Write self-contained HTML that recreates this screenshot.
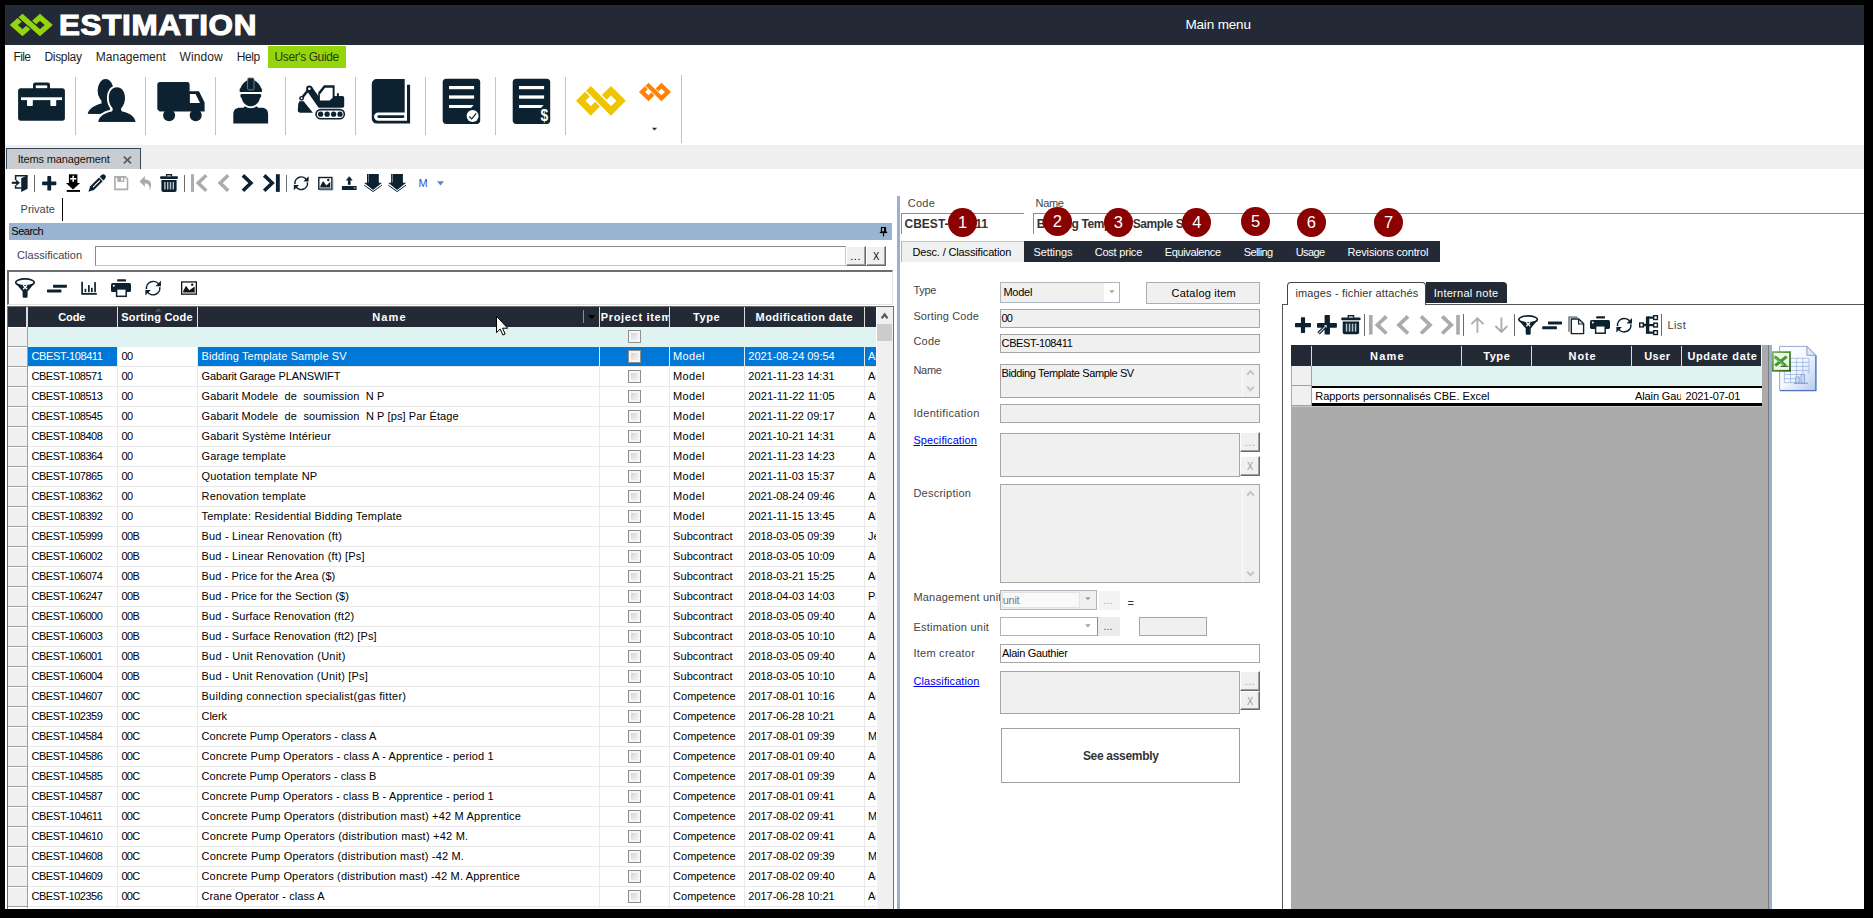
<!DOCTYPE html>
<html><head><meta charset="utf-8"><title>Estimation</title><style>html,body{margin:0;padding:0;background:#000;}
body{width:1873px;height:918px;position:relative;overflow:hidden;font-family:"Liberation Sans",sans-serif;}
.a{position:absolute;display:block;}
.t{position:absolute;display:block;white-space:pre;line-height:16px;height:16px;font-family:"Liberation Sans",sans-serif;}
</style></head><body>
<div class="a" style="left:5px;top:5px;width:1859px;height:904px;background:#fff;"></div>
<div class="a" style="left:5px;top:5px;width:1859px;height:39.5px;background:#232a36;"></div>
<span id="t1" class="t" style="left:59.3px;top:17.42px;font-size:28.8px;color:#fff;font-weight:bold;letter-spacing:0.628px;-webkit-text-stroke:1.1px #fff;transform:scaleX(1.09);transform-origin:0 0;">ESTIMATION</span>
<span id="t2" class="t" style="left:1185.4px;top:17.22px;font-size:13.5px;color:#fff;letter-spacing:-0.150px;">Main menu</span>
<div class="a" style="left:268px;top:46px;width:78px;height:22px;background:#95d50b;"></div>
<span id="t3" class="t" style="left:13.6px;top:48.74px;font-size:12px;color:#1e1e1e;letter-spacing:-0.648px;">File</span>
<span id="t4" class="t" style="left:44.5px;top:48.74px;font-size:12px;color:#1e1e1e;letter-spacing:-0.327px;">Display</span>
<span id="t5" class="t" style="left:95.8px;top:48.74px;font-size:12px;color:#1e1e1e;letter-spacing:-0.005px;">Management</span>
<span id="t6" class="t" style="left:179.5px;top:48.74px;font-size:12px;color:#1e1e1e;letter-spacing:0.103px;">Window</span>
<span id="t7" class="t" style="left:236.7px;top:48.74px;font-size:12px;color:#1e1e1e;letter-spacing:-0.362px;">Help</span>
<span id="t8" class="t" style="left:274.6px;top:48.74px;font-size:12px;color:#2a3a10;letter-spacing:-0.408px;">User's Guide</span>
<div class="a" style="left:75px;top:77px;width:1px;height:58px;background:#c3c3c3;"></div>
<div class="a" style="left:145px;top:77px;width:1px;height:58px;background:#c3c3c3;"></div>
<div class="a" style="left:215px;top:77px;width:1px;height:58px;background:#c3c3c3;"></div>
<div class="a" style="left:285px;top:77px;width:1px;height:58px;background:#c3c3c3;"></div>
<div class="a" style="left:355px;top:77px;width:1px;height:58px;background:#c3c3c3;"></div>
<div class="a" style="left:425px;top:77px;width:1px;height:58px;background:#c3c3c3;"></div>
<div class="a" style="left:495px;top:77px;width:1px;height:58px;background:#c3c3c3;"></div>
<div class="a" style="left:565px;top:77px;width:1px;height:58px;background:#c3c3c3;"></div>
<div class="a" style="left:681px;top:75px;width:1px;height:68px;background:#c3c3c3;"></div>
<div class="a" style="left:5px;top:145px;width:1859px;height:24px;background:#efefef;"></div>
<div class="a" style="left:6px;top:148px;width:135px;height:21px;background:#c9cdd1;border:1px solid #34495a;border-bottom:none;box-sizing:border-box;"></div>
<span id="t9" class="t" style="left:17.7px;top:151.29px;font-size:11px;color:#111;letter-spacing:-0.144px;">Items management</span>
<svg class="a" style="left:123px;top:156px;" width="9" height="8" viewBox="0 0 9 8"><path d="M0.8 0.6 L8 7.4 M8 0.6 L0.8 7.4" stroke="#555" stroke-width="1.5" fill="none"/></svg>
<div class="a" style="left:34px;top:175px;width:1px;height:17px;background:#6a6a6a;"></div>
<div class="a" style="left:184px;top:175px;width:1px;height:17px;background:#6a6a6a;"></div>
<div class="a" style="left:286px;top:175px;width:1px;height:17px;background:#6a6a6a;"></div>
<span id="t10" class="t" style="left:418.6px;top:175.29px;font-size:11px;color:#3050c8;letter-spacing:-1.572px;">M</span>
<svg class="a" style="left:436.5px;top:181px;" width="7" height="5" viewBox="0 0 7 5"><path d="M0 0.3 H7 L3.5 4.6 Z" fill="#5a84c4"/></svg>
<span id="t11" class="t" style="left:20.6px;top:200.79px;font-size:11px;color:#444;letter-spacing:0.008px;">Private</span>
<div class="a" style="left:62px;top:198px;width:1px;height:23px;background:#000;"></div>
<div class="a" style="left:9px;top:223px;width:883px;height:17px;background:#9ab3d1;"></div>
<span id="t12" class="t" style="left:11.3px;top:222.69px;font-size:11px;color:#000;letter-spacing:-0.492px;">Search</span>
<svg class="a" style="left:879px;top:227px;" width="9" height="10" viewBox="0 0 9 10"><path d="M2.5 0.5 H6.5 V5 H2.5 Z" fill="none" stroke="#000" stroke-width="1.2"/><path d="M5.8 0.5 V5" stroke="#000" stroke-width="1.6"/><path d="M0.8 5.4 H8.2" stroke="#000" stroke-width="1.4"/><path d="M4.5 5.4 V9.4" stroke="#000" stroke-width="1.2"/></svg>
<span id="t13" class="t" style="left:17.1px;top:247.19px;font-size:11px;color:#444;letter-spacing:0.014px;">Classification</span>
<div class="a" style="left:95px;top:246px;width:751px;height:20px;background:#fff;border:1px solid;border-color:#8c8c8c #c6c6c6 #c6c6c6 #8c8c8c;box-sizing:border-box;"></div>
<div class="a" style="left:845.8px;top:246px;width:20px;height:19.8px;background:#f0f0f0;border:1px solid;border-color:#fff #696969 #696969 #fff;box-sizing:border-box;box-shadow:inset -1px -1px 0 #a0a0a0;"></div>
<span id="t14" class="t" style="left:850.2px;top:248.39px;font-size:11px;color:#000;letter-spacing:0.614px;">...</span>
<div class="a" style="left:866.2px;top:246px;width:19.8px;height:19.8px;background:#f0f0f0;border:1px solid;border-color:#fff #696969 #696969 #fff;box-sizing:border-box;box-shadow:inset -1px -1px 0 #a0a0a0;"></div>
<span id="t15" class="t" style="left:872.5px;top:248.19px;font-size:11px;color:#000;transform:scaleX(0.86);transform-origin:0 0;">X</span>
<div class="a" style="left:7px;top:270px;width:885.5px;height:34.5px;background:#fff;box-sizing:border-box;border-top:2px solid #6e6e6e;border-left:2px solid #6e6e6e;border-right:1px solid #e3e3e3;border-bottom:1px solid #e3e3e3;"></div>
<div class="a" style="left:897px;top:196px;width:3px;height:713px;background:#98b1d1;"></div>
<div class="a" style="left:7px;top:306px;width:886.5px;height:603px;background:#fff;box-sizing:border-box;border-top:1px solid #6e6e6e;border-left:1px solid #6e6e6e;border-right:1px solid #6e6e6e;"></div>
<div class="a" style="left:8px;top:306.5px;width:868px;height:20.5px;background:#232a36;"></div>
<div class="a" style="left:26.4px;top:307px;width:1.3px;height:20px;background:#dcdcdc;"></div>
<div class="a" style="left:116.60000000000001px;top:307px;width:1.3px;height:20px;background:#dcdcdc;"></div>
<div class="a" style="left:197.0px;top:307px;width:1.3px;height:20px;background:#dcdcdc;"></div>
<div class="a" style="left:598.9px;top:307px;width:1.3px;height:20px;background:#dcdcdc;"></div>
<div class="a" style="left:668.6999999999999px;top:307px;width:1.3px;height:20px;background:#dcdcdc;"></div>
<div class="a" style="left:743.6px;top:307px;width:1.3px;height:20px;background:#dcdcdc;"></div>
<div class="a" style="left:863.8px;top:307px;width:1.3px;height:20px;background:#dcdcdc;"></div>
<div class="a" style="left:583.2px;top:310px;width:1px;height:13px;background:#8a8f96;"></div>
<svg class="a" style="left:587.5px;top:315px;" width="8" height="5" viewBox="0 0 8 5"><path d="M0 0 H7.4 L3.7 4.2 Z" fill="#000"/></svg>
<svg class="a" style="left:154.5px;top:307.5px;" width="7" height="4" viewBox="0 0 7 4"><path d="M0 3.6 L3.3 0.2 L6.6 3.6 Z" fill="#4a5563"/></svg>
<span id="t16" class="t" style="left:58.3px;top:309.19px;font-size:11px;color:#fff;font-weight:bold;letter-spacing:-0.167px;">Code</span>
<span id="t17" class="t" style="left:121.3px;top:309.19px;font-size:11px;color:#fff;font-weight:bold;letter-spacing:0.203px;">Sorting Code</span>
<span id="t18" class="t" style="left:372.2px;top:309.19px;font-size:11px;color:#fff;font-weight:bold;letter-spacing:1.177px;">Name</span>
<span id="t19" class="t" style="left:600.7px;top:309.19px;font-size:11px;color:#fff;font-weight:bold;letter-spacing:0.685px;width:68.2px;overflow:hidden;">Project item</span>
<span id="t20" class="t" style="left:693.1px;top:309.19px;font-size:11px;color:#fff;font-weight:bold;letter-spacing:0.580px;">Type</span>
<span id="t21" class="t" style="left:755.6px;top:309.19px;font-size:11px;color:#fff;font-weight:bold;letter-spacing:0.409px;">Modification date</span>
<div class="a" style="left:27.6px;top:327px;width:848.4px;height:19.5px;background:#dff3f1;"></div>
<div class="a" style="left:876.8px;top:306.8px;width:16.2px;height:602.2px;background:#f0f0f0;"></div>
<div class="a" style="left:877.2px;top:324.2px;width:15px;height:16.6px;background:#cdcdcd;"></div>
<svg class="a" style="left:879px;top:311px;" width="12" height="10" viewBox="0 0 12 10"><path d="M2.7 7.4 L5.6 3.4 L8.5 7.4" stroke="#585858" stroke-width="2.3" fill="none"/></svg>
<div class="a" style="left:116.7px;top:346.5px;width:1px;height:561.5px;background:#e9e9e9;"></div>
<div class="a" style="left:197.1px;top:346.5px;width:1px;height:561.5px;background:#e9e9e9;"></div>
<div class="a" style="left:599.0px;top:346.5px;width:1px;height:561.5px;background:#e9e9e9;"></div>
<div class="a" style="left:668.8px;top:346.5px;width:1px;height:561.5px;background:#e9e9e9;"></div>
<div class="a" style="left:743.7px;top:346.5px;width:1px;height:561.5px;background:#e9e9e9;"></div>
<div class="a" style="left:863.9px;top:346.5px;width:1px;height:561.5px;background:#e9e9e9;"></div>
<div class="a" style="left:628px;top:330px;width:13px;height:13px;box-sizing:border-box;border:1px solid #8e8f8f;background:linear-gradient(135deg,#c9ccd0 0%,#e4e5e7 50%,#fbfbfb 100%);box-shadow:inset 0 0 0 2px #f6f6f6;"></div>
<div class="a" style="left:8px;top:327px;width:19px;height:581px;background:#f0f0f0;"></div>
<div class="a" style="left:8px;top:327px;width:19px;height:1px;background:#fff;"></div>
<div class="a" style="left:27.6px;top:346.5px;width:89px;height:19.5px;background:#0078d7;"></div>
<div class="a" style="left:197.9px;top:346.5px;width:401.2px;height:19.5px;background:#0078d7;"></div>
<div class="a" style="left:600px;top:346.5px;width:68.9px;height:19.5px;background:#0078d7;"></div>
<div class="a" style="left:669.9px;top:346.5px;width:73.9px;height:19.5px;background:#0078d7;"></div>
<div class="a" style="left:744.8px;top:346.5px;width:119.1px;height:19.5px;background:#0078d7;"></div>
<div class="a" style="left:865px;top:346.5px;width:11px;height:19.5px;background:#0078d7;"></div>
<div class="a" style="left:27.6px;top:366.0px;width:848.4px;height:1px;background:#e9e9e9;"></div>
<span id="t22" class="t" style="left:31.5px;top:348.29px;font-size:11px;color:#fff;letter-spacing:-0.384px;">CBEST-108411</span>
<span id="t23" class="t" style="left:121.5px;top:348.29px;font-size:11px;color:#000;letter-spacing:-0.650px;">00</span>
<span id="t24" class="t" style="left:201.5px;top:348.29px;font-size:11px;color:#fff;letter-spacing:0.113px;">Bidding Template Sample SV</span>
<div class="a" style="left:628px;top:350.0px;width:13px;height:13px;box-sizing:border-box;border:1px solid #8e8f8f;background:linear-gradient(135deg,#c9ccd0 0%,#e4e5e7 50%,#fbfbfb 100%);box-shadow:inset 0 0 0 2px #f6f6f6;"></div>
<span id="t25" class="t" style="left:673.0px;top:348.29px;font-size:11px;color:#fff;letter-spacing:0.358px;">Model</span>
<span id="t26" class="t" style="left:748.3px;top:348.29px;font-size:11px;color:#fff;letter-spacing:-0.031px;">2021-08-24 09:54</span>
<span id="t27" class="t" style="left:868.0px;top:348.29px;font-size:11px;color:#fff;width:8.0px;overflow:hidden;">Al</span>
<div class="a" style="left:27.6px;top:386.0px;width:848.4px;height:1px;background:#e9e9e9;"></div>
<span id="t28" class="t" style="left:31.5px;top:368.29px;font-size:11px;color:#000;letter-spacing:-0.458px;">CBEST-108571</span>
<span id="t29" class="t" style="left:121.5px;top:368.29px;font-size:11px;color:#000;letter-spacing:-0.650px;">00</span>
<span id="t30" class="t" style="left:201.5px;top:368.29px;font-size:11px;color:#000;letter-spacing:-0.127px;">Gabarit Garage PLANSWIFT</span>
<div class="a" style="left:628px;top:370.0px;width:13px;height:13px;box-sizing:border-box;border:1px solid #8e8f8f;background:linear-gradient(135deg,#c9ccd0 0%,#e4e5e7 50%,#fbfbfb 100%);box-shadow:inset 0 0 0 2px #f6f6f6;"></div>
<span id="t31" class="t" style="left:673.0px;top:368.29px;font-size:11px;color:#000;letter-spacing:0.358px;">Model</span>
<span id="t32" class="t" style="left:748.3px;top:368.29px;font-size:11px;color:#000;letter-spacing:0.024px;">2021-11-23 14:31</span>
<span id="t33" class="t" style="left:868.0px;top:368.29px;font-size:11px;color:#000;width:8.0px;overflow:hidden;">Ad</span>
<div class="a" style="left:27.6px;top:406.0px;width:848.4px;height:1px;background:#e9e9e9;"></div>
<span id="t34" class="t" style="left:31.5px;top:388.29px;font-size:11px;color:#000;letter-spacing:-0.458px;">CBEST-108513</span>
<span id="t35" class="t" style="left:121.5px;top:388.29px;font-size:11px;color:#000;letter-spacing:-0.650px;">00</span>
<span id="t36" class="t" style="left:201.5px;top:388.29px;font-size:11px;color:#000;letter-spacing:0.108px;">Gabarit Modele  de  soumission  N P</span>
<div class="a" style="left:628px;top:390.0px;width:13px;height:13px;box-sizing:border-box;border:1px solid #8e8f8f;background:linear-gradient(135deg,#c9ccd0 0%,#e4e5e7 50%,#fbfbfb 100%);box-shadow:inset 0 0 0 2px #f6f6f6;"></div>
<span id="t37" class="t" style="left:673.0px;top:388.29px;font-size:11px;color:#000;letter-spacing:0.358px;">Model</span>
<span id="t38" class="t" style="left:748.3px;top:388.29px;font-size:11px;color:#000;letter-spacing:0.079px;">2021-11-22 11:05</span>
<span id="t39" class="t" style="left:868.0px;top:388.29px;font-size:11px;color:#000;width:8.0px;overflow:hidden;">Al</span>
<div class="a" style="left:27.6px;top:426.0px;width:848.4px;height:1px;background:#e9e9e9;"></div>
<span id="t40" class="t" style="left:31.5px;top:408.29px;font-size:11px;color:#000;letter-spacing:-0.458px;">CBEST-108545</span>
<span id="t41" class="t" style="left:121.5px;top:408.29px;font-size:11px;color:#000;letter-spacing:-0.650px;">00</span>
<span id="t42" class="t" style="left:201.5px;top:408.29px;font-size:11px;color:#000;letter-spacing:0.112px;">Gabarit Modele  de  soumission  N P [ps] Par Étage</span>
<div class="a" style="left:628px;top:410.0px;width:13px;height:13px;box-sizing:border-box;border:1px solid #8e8f8f;background:linear-gradient(135deg,#c9ccd0 0%,#e4e5e7 50%,#fbfbfb 100%);box-shadow:inset 0 0 0 2px #f6f6f6;"></div>
<span id="t43" class="t" style="left:673.0px;top:408.29px;font-size:11px;color:#000;letter-spacing:0.358px;">Model</span>
<span id="t44" class="t" style="left:748.3px;top:408.29px;font-size:11px;color:#000;letter-spacing:0.024px;">2021-11-22 09:17</span>
<span id="t45" class="t" style="left:868.0px;top:408.29px;font-size:11px;color:#000;width:8.0px;overflow:hidden;">Al</span>
<div class="a" style="left:27.6px;top:446.0px;width:848.4px;height:1px;background:#e9e9e9;"></div>
<span id="t46" class="t" style="left:31.5px;top:428.29px;font-size:11px;color:#000;letter-spacing:-0.458px;">CBEST-108408</span>
<span id="t47" class="t" style="left:121.5px;top:428.29px;font-size:11px;color:#000;letter-spacing:-0.650px;">00</span>
<span id="t48" class="t" style="left:201.5px;top:428.29px;font-size:11px;color:#000;letter-spacing:0.165px;">Gabarit Système Intérieur</span>
<div class="a" style="left:628px;top:430.0px;width:13px;height:13px;box-sizing:border-box;border:1px solid #8e8f8f;background:linear-gradient(135deg,#c9ccd0 0%,#e4e5e7 50%,#fbfbfb 100%);box-shadow:inset 0 0 0 2px #f6f6f6;"></div>
<span id="t49" class="t" style="left:673.0px;top:428.29px;font-size:11px;color:#000;letter-spacing:0.358px;">Model</span>
<span id="t50" class="t" style="left:748.3px;top:428.29px;font-size:11px;color:#000;letter-spacing:-0.031px;">2021-10-21 14:31</span>
<span id="t51" class="t" style="left:868.0px;top:428.29px;font-size:11px;color:#000;width:8.0px;overflow:hidden;">Al</span>
<div class="a" style="left:27.6px;top:466.0px;width:848.4px;height:1px;background:#e9e9e9;"></div>
<span id="t52" class="t" style="left:31.5px;top:448.29px;font-size:11px;color:#000;letter-spacing:-0.458px;">CBEST-108364</span>
<span id="t53" class="t" style="left:121.5px;top:448.29px;font-size:11px;color:#000;letter-spacing:-0.650px;">00</span>
<span id="t54" class="t" style="left:201.5px;top:448.29px;font-size:11px;color:#000;letter-spacing:0.169px;">Garage template</span>
<div class="a" style="left:628px;top:450.0px;width:13px;height:13px;box-sizing:border-box;border:1px solid #8e8f8f;background:linear-gradient(135deg,#c9ccd0 0%,#e4e5e7 50%,#fbfbfb 100%);box-shadow:inset 0 0 0 2px #f6f6f6;"></div>
<span id="t55" class="t" style="left:673.0px;top:448.29px;font-size:11px;color:#000;letter-spacing:0.358px;">Model</span>
<span id="t56" class="t" style="left:748.3px;top:448.29px;font-size:11px;color:#000;letter-spacing:0.024px;">2021-11-23 14:23</span>
<span id="t57" class="t" style="left:868.0px;top:448.29px;font-size:11px;color:#000;width:8.0px;overflow:hidden;">Al</span>
<div class="a" style="left:27.6px;top:486.0px;width:848.4px;height:1px;background:#e9e9e9;"></div>
<span id="t58" class="t" style="left:31.5px;top:468.29px;font-size:11px;color:#000;letter-spacing:-0.458px;">CBEST-107865</span>
<span id="t59" class="t" style="left:121.5px;top:468.29px;font-size:11px;color:#000;letter-spacing:-0.650px;">00</span>
<span id="t60" class="t" style="left:201.5px;top:468.29px;font-size:11px;color:#000;letter-spacing:0.220px;">Quotation template NP</span>
<div class="a" style="left:628px;top:470.0px;width:13px;height:13px;box-sizing:border-box;border:1px solid #8e8f8f;background:linear-gradient(135deg,#c9ccd0 0%,#e4e5e7 50%,#fbfbfb 100%);box-shadow:inset 0 0 0 2px #f6f6f6;"></div>
<span id="t61" class="t" style="left:673.0px;top:468.29px;font-size:11px;color:#000;letter-spacing:0.358px;">Model</span>
<span id="t62" class="t" style="left:748.3px;top:468.29px;font-size:11px;color:#000;letter-spacing:0.024px;">2021-11-03 15:37</span>
<span id="t63" class="t" style="left:868.0px;top:468.29px;font-size:11px;color:#000;width:8.0px;overflow:hidden;">Al</span>
<div class="a" style="left:27.6px;top:506.0px;width:848.4px;height:1px;background:#e9e9e9;"></div>
<span id="t64" class="t" style="left:31.5px;top:488.29px;font-size:11px;color:#000;letter-spacing:-0.458px;">CBEST-108362</span>
<span id="t65" class="t" style="left:121.5px;top:488.29px;font-size:11px;color:#000;letter-spacing:-0.650px;">00</span>
<span id="t66" class="t" style="left:201.5px;top:488.29px;font-size:11px;color:#000;letter-spacing:0.194px;">Renovation template</span>
<div class="a" style="left:628px;top:490.0px;width:13px;height:13px;box-sizing:border-box;border:1px solid #8e8f8f;background:linear-gradient(135deg,#c9ccd0 0%,#e4e5e7 50%,#fbfbfb 100%);box-shadow:inset 0 0 0 2px #f6f6f6;"></div>
<span id="t67" class="t" style="left:673.0px;top:488.29px;font-size:11px;color:#000;letter-spacing:0.358px;">Model</span>
<span id="t68" class="t" style="left:748.3px;top:488.29px;font-size:11px;color:#000;letter-spacing:-0.031px;">2021-08-24 09:46</span>
<span id="t69" class="t" style="left:868.0px;top:488.29px;font-size:11px;color:#000;width:8.0px;overflow:hidden;">Al</span>
<div class="a" style="left:27.6px;top:526.0px;width:848.4px;height:1px;background:#e9e9e9;"></div>
<span id="t70" class="t" style="left:31.5px;top:508.29px;font-size:11px;color:#000;letter-spacing:-0.458px;">CBEST-108392</span>
<span id="t71" class="t" style="left:121.5px;top:508.29px;font-size:11px;color:#000;letter-spacing:-0.650px;">00</span>
<span id="t72" class="t" style="left:201.5px;top:508.29px;font-size:11px;color:#000;letter-spacing:0.218px;">Template: Residential Bidding Template</span>
<div class="a" style="left:628px;top:510.0px;width:13px;height:13px;box-sizing:border-box;border:1px solid #8e8f8f;background:linear-gradient(135deg,#c9ccd0 0%,#e4e5e7 50%,#fbfbfb 100%);box-shadow:inset 0 0 0 2px #f6f6f6;"></div>
<span id="t73" class="t" style="left:673.0px;top:508.29px;font-size:11px;color:#000;letter-spacing:0.358px;">Model</span>
<span id="t74" class="t" style="left:748.3px;top:508.29px;font-size:11px;color:#000;letter-spacing:0.024px;">2021-11-15 13:45</span>
<span id="t75" class="t" style="left:868.0px;top:508.29px;font-size:11px;color:#000;width:8.0px;overflow:hidden;">Al</span>
<div class="a" style="left:27.6px;top:546.0px;width:848.4px;height:1px;background:#e9e9e9;"></div>
<span id="t76" class="t" style="left:31.5px;top:528.29px;font-size:11px;color:#000;letter-spacing:-0.458px;">CBEST-105999</span>
<span id="t77" class="t" style="left:121.5px;top:528.29px;font-size:11px;color:#000;letter-spacing:-0.589px;">00B</span>
<span id="t78" class="t" style="left:201.5px;top:528.29px;font-size:11px;color:#000;letter-spacing:0.198px;">Bud - Linear Renovation (ft)</span>
<div class="a" style="left:628px;top:530.0px;width:13px;height:13px;box-sizing:border-box;border:1px solid #8e8f8f;background:linear-gradient(135deg,#c9ccd0 0%,#e4e5e7 50%,#fbfbfb 100%);box-shadow:inset 0 0 0 2px #f6f6f6;"></div>
<span id="t79" class="t" style="left:673.0px;top:528.29px;font-size:11px;color:#000;letter-spacing:0.090px;">Subcontract</span>
<span id="t80" class="t" style="left:748.3px;top:528.29px;font-size:11px;color:#000;letter-spacing:-0.031px;">2018-03-05 09:39</span>
<span id="t81" class="t" style="left:868.0px;top:528.29px;font-size:11px;color:#000;width:8.0px;overflow:hidden;">Je</span>
<div class="a" style="left:27.6px;top:566.0px;width:848.4px;height:1px;background:#e9e9e9;"></div>
<span id="t82" class="t" style="left:31.5px;top:548.29px;font-size:11px;color:#000;letter-spacing:-0.458px;">CBEST-106002</span>
<span id="t83" class="t" style="left:121.5px;top:548.29px;font-size:11px;color:#000;letter-spacing:-0.589px;">00B</span>
<span id="t84" class="t" style="left:201.5px;top:548.29px;font-size:11px;color:#000;letter-spacing:0.186px;">Bud - Linear Renovation (ft) [Ps]</span>
<div class="a" style="left:628px;top:550.0px;width:13px;height:13px;box-sizing:border-box;border:1px solid #8e8f8f;background:linear-gradient(135deg,#c9ccd0 0%,#e4e5e7 50%,#fbfbfb 100%);box-shadow:inset 0 0 0 2px #f6f6f6;"></div>
<span id="t85" class="t" style="left:673.0px;top:548.29px;font-size:11px;color:#000;letter-spacing:0.090px;">Subcontract</span>
<span id="t86" class="t" style="left:748.3px;top:548.29px;font-size:11px;color:#000;letter-spacing:-0.031px;">2018-03-05 10:09</span>
<span id="t87" class="t" style="left:868.0px;top:548.29px;font-size:11px;color:#000;width:8.0px;overflow:hidden;">Ad</span>
<div class="a" style="left:27.6px;top:586.0px;width:848.4px;height:1px;background:#e9e9e9;"></div>
<span id="t88" class="t" style="left:31.5px;top:568.29px;font-size:11px;color:#000;letter-spacing:-0.458px;">CBEST-106074</span>
<span id="t89" class="t" style="left:121.5px;top:568.29px;font-size:11px;color:#000;letter-spacing:-0.589px;">00B</span>
<span id="t90" class="t" style="left:201.5px;top:568.29px;font-size:11px;color:#000;letter-spacing:0.109px;">Bud - Price for the Area ($)</span>
<div class="a" style="left:628px;top:570.0px;width:13px;height:13px;box-sizing:border-box;border:1px solid #8e8f8f;background:linear-gradient(135deg,#c9ccd0 0%,#e4e5e7 50%,#fbfbfb 100%);box-shadow:inset 0 0 0 2px #f6f6f6;"></div>
<span id="t91" class="t" style="left:673.0px;top:568.29px;font-size:11px;color:#000;letter-spacing:0.090px;">Subcontract</span>
<span id="t92" class="t" style="left:748.3px;top:568.29px;font-size:11px;color:#000;letter-spacing:-0.031px;">2018-03-21 15:25</span>
<span id="t93" class="t" style="left:868.0px;top:568.29px;font-size:11px;color:#000;width:8.0px;overflow:hidden;">Ad</span>
<div class="a" style="left:27.6px;top:606.0px;width:848.4px;height:1px;background:#e9e9e9;"></div>
<span id="t94" class="t" style="left:31.5px;top:588.29px;font-size:11px;color:#000;letter-spacing:-0.458px;">CBEST-106247</span>
<span id="t95" class="t" style="left:121.5px;top:588.29px;font-size:11px;color:#000;letter-spacing:-0.589px;">00B</span>
<span id="t96" class="t" style="left:201.5px;top:588.29px;font-size:11px;color:#000;letter-spacing:0.086px;">Bud - Price for the Section ($)</span>
<div class="a" style="left:628px;top:590.0px;width:13px;height:13px;box-sizing:border-box;border:1px solid #8e8f8f;background:linear-gradient(135deg,#c9ccd0 0%,#e4e5e7 50%,#fbfbfb 100%);box-shadow:inset 0 0 0 2px #f6f6f6;"></div>
<span id="t97" class="t" style="left:673.0px;top:588.29px;font-size:11px;color:#000;letter-spacing:0.090px;">Subcontract</span>
<span id="t98" class="t" style="left:748.3px;top:588.29px;font-size:11px;color:#000;letter-spacing:-0.031px;">2018-04-03 14:03</span>
<span id="t99" class="t" style="left:868.0px;top:588.29px;font-size:11px;color:#000;width:8.0px;overflow:hidden;">Pa</span>
<div class="a" style="left:27.6px;top:626.0px;width:848.4px;height:1px;background:#e9e9e9;"></div>
<span id="t100" class="t" style="left:31.5px;top:608.29px;font-size:11px;color:#000;letter-spacing:-0.458px;">CBEST-106000</span>
<span id="t101" class="t" style="left:121.5px;top:608.29px;font-size:11px;color:#000;letter-spacing:-0.589px;">00B</span>
<span id="t102" class="t" style="left:201.5px;top:608.29px;font-size:11px;color:#000;letter-spacing:0.139px;">Bud - Surface Renovation (ft2)</span>
<div class="a" style="left:628px;top:610.0px;width:13px;height:13px;box-sizing:border-box;border:1px solid #8e8f8f;background:linear-gradient(135deg,#c9ccd0 0%,#e4e5e7 50%,#fbfbfb 100%);box-shadow:inset 0 0 0 2px #f6f6f6;"></div>
<span id="t103" class="t" style="left:673.0px;top:608.29px;font-size:11px;color:#000;letter-spacing:0.090px;">Subcontract</span>
<span id="t104" class="t" style="left:748.3px;top:608.29px;font-size:11px;color:#000;letter-spacing:-0.031px;">2018-03-05 09:40</span>
<span id="t105" class="t" style="left:868.0px;top:608.29px;font-size:11px;color:#000;width:8.0px;overflow:hidden;">Ad</span>
<div class="a" style="left:27.6px;top:646.0px;width:848.4px;height:1px;background:#e9e9e9;"></div>
<span id="t106" class="t" style="left:31.5px;top:628.29px;font-size:11px;color:#000;letter-spacing:-0.458px;">CBEST-106003</span>
<span id="t107" class="t" style="left:121.5px;top:628.29px;font-size:11px;color:#000;letter-spacing:-0.589px;">00B</span>
<span id="t108" class="t" style="left:201.5px;top:628.29px;font-size:11px;color:#000;letter-spacing:0.135px;">Bud - Surface Renovation (ft2) [Ps]</span>
<div class="a" style="left:628px;top:630.0px;width:13px;height:13px;box-sizing:border-box;border:1px solid #8e8f8f;background:linear-gradient(135deg,#c9ccd0 0%,#e4e5e7 50%,#fbfbfb 100%);box-shadow:inset 0 0 0 2px #f6f6f6;"></div>
<span id="t109" class="t" style="left:673.0px;top:628.29px;font-size:11px;color:#000;letter-spacing:0.090px;">Subcontract</span>
<span id="t110" class="t" style="left:748.3px;top:628.29px;font-size:11px;color:#000;letter-spacing:-0.031px;">2018-03-05 10:10</span>
<span id="t111" class="t" style="left:868.0px;top:628.29px;font-size:11px;color:#000;width:8.0px;overflow:hidden;">Ad</span>
<div class="a" style="left:27.6px;top:666.0px;width:848.4px;height:1px;background:#e9e9e9;"></div>
<span id="t112" class="t" style="left:31.5px;top:648.29px;font-size:11px;color:#000;letter-spacing:-0.458px;">CBEST-106001</span>
<span id="t113" class="t" style="left:121.5px;top:648.29px;font-size:11px;color:#000;letter-spacing:-0.589px;">00B</span>
<span id="t114" class="t" style="left:201.5px;top:648.29px;font-size:11px;color:#000;letter-spacing:0.231px;">Bud - Unit Renovation (Unit)</span>
<div class="a" style="left:628px;top:650.0px;width:13px;height:13px;box-sizing:border-box;border:1px solid #8e8f8f;background:linear-gradient(135deg,#c9ccd0 0%,#e4e5e7 50%,#fbfbfb 100%);box-shadow:inset 0 0 0 2px #f6f6f6;"></div>
<span id="t115" class="t" style="left:673.0px;top:648.29px;font-size:11px;color:#000;letter-spacing:0.090px;">Subcontract</span>
<span id="t116" class="t" style="left:748.3px;top:648.29px;font-size:11px;color:#000;letter-spacing:-0.031px;">2018-03-05 09:40</span>
<span id="t117" class="t" style="left:868.0px;top:648.29px;font-size:11px;color:#000;width:8.0px;overflow:hidden;">Ad</span>
<div class="a" style="left:27.6px;top:686.0px;width:848.4px;height:1px;background:#e9e9e9;"></div>
<span id="t118" class="t" style="left:31.5px;top:668.29px;font-size:11px;color:#000;letter-spacing:-0.458px;">CBEST-106004</span>
<span id="t119" class="t" style="left:121.5px;top:668.29px;font-size:11px;color:#000;letter-spacing:-0.589px;">00B</span>
<span id="t120" class="t" style="left:201.5px;top:668.29px;font-size:11px;color:#000;letter-spacing:0.213px;">Bud - Unit Renovation (Unit) [Ps]</span>
<div class="a" style="left:628px;top:670.0px;width:13px;height:13px;box-sizing:border-box;border:1px solid #8e8f8f;background:linear-gradient(135deg,#c9ccd0 0%,#e4e5e7 50%,#fbfbfb 100%);box-shadow:inset 0 0 0 2px #f6f6f6;"></div>
<span id="t121" class="t" style="left:673.0px;top:668.29px;font-size:11px;color:#000;letter-spacing:0.090px;">Subcontract</span>
<span id="t122" class="t" style="left:748.3px;top:668.29px;font-size:11px;color:#000;letter-spacing:-0.031px;">2018-03-05 10:10</span>
<span id="t123" class="t" style="left:868.0px;top:668.29px;font-size:11px;color:#000;width:8.0px;overflow:hidden;">Ad</span>
<div class="a" style="left:27.6px;top:706.0px;width:848.4px;height:1px;background:#e9e9e9;"></div>
<span id="t124" class="t" style="left:31.5px;top:688.29px;font-size:11px;color:#000;letter-spacing:-0.458px;">CBEST-104607</span>
<span id="t125" class="t" style="left:121.5px;top:688.29px;font-size:11px;color:#000;letter-spacing:-0.794px;">00C</span>
<span id="t126" class="t" style="left:201.5px;top:688.29px;font-size:11px;color:#000;letter-spacing:0.275px;">Building connection specialist(gas fitter)</span>
<div class="a" style="left:628px;top:690.0px;width:13px;height:13px;box-sizing:border-box;border:1px solid #8e8f8f;background:linear-gradient(135deg,#c9ccd0 0%,#e4e5e7 50%,#fbfbfb 100%);box-shadow:inset 0 0 0 2px #f6f6f6;"></div>
<span id="t127" class="t" style="left:673.0px;top:688.29px;font-size:11px;color:#000;letter-spacing:0.036px;">Competence</span>
<span id="t128" class="t" style="left:748.3px;top:688.29px;font-size:11px;color:#000;letter-spacing:-0.031px;">2017-08-01 10:16</span>
<span id="t129" class="t" style="left:868.0px;top:688.29px;font-size:11px;color:#000;width:8.0px;overflow:hidden;">Ad</span>
<div class="a" style="left:27.6px;top:726.0px;width:848.4px;height:1px;background:#e9e9e9;"></div>
<span id="t130" class="t" style="left:31.5px;top:708.29px;font-size:11px;color:#000;letter-spacing:-0.458px;">CBEST-102359</span>
<span id="t131" class="t" style="left:121.5px;top:708.29px;font-size:11px;color:#000;letter-spacing:-0.794px;">00C</span>
<span id="t132" class="t" style="left:201.5px;top:708.29px;font-size:11px;color:#000;letter-spacing:-0.018px;">Clerk</span>
<div class="a" style="left:628px;top:710.0px;width:13px;height:13px;box-sizing:border-box;border:1px solid #8e8f8f;background:linear-gradient(135deg,#c9ccd0 0%,#e4e5e7 50%,#fbfbfb 100%);box-shadow:inset 0 0 0 2px #f6f6f6;"></div>
<span id="t133" class="t" style="left:673.0px;top:708.29px;font-size:11px;color:#000;letter-spacing:0.036px;">Competence</span>
<span id="t134" class="t" style="left:748.3px;top:708.29px;font-size:11px;color:#000;letter-spacing:-0.031px;">2017-06-28 10:21</span>
<span id="t135" class="t" style="left:868.0px;top:708.29px;font-size:11px;color:#000;width:8.0px;overflow:hidden;">Ad</span>
<div class="a" style="left:27.6px;top:746.0px;width:848.4px;height:1px;background:#e9e9e9;"></div>
<span id="t136" class="t" style="left:31.5px;top:728.29px;font-size:11px;color:#000;letter-spacing:-0.458px;">CBEST-104584</span>
<span id="t137" class="t" style="left:121.5px;top:728.29px;font-size:11px;color:#000;letter-spacing:-0.794px;">00C</span>
<span id="t138" class="t" style="left:201.5px;top:728.29px;font-size:11px;color:#000;letter-spacing:0.059px;">Concrete Pump Operators - class A</span>
<div class="a" style="left:628px;top:730.0px;width:13px;height:13px;box-sizing:border-box;border:1px solid #8e8f8f;background:linear-gradient(135deg,#c9ccd0 0%,#e4e5e7 50%,#fbfbfb 100%);box-shadow:inset 0 0 0 2px #f6f6f6;"></div>
<span id="t139" class="t" style="left:673.0px;top:728.29px;font-size:11px;color:#000;letter-spacing:0.036px;">Competence</span>
<span id="t140" class="t" style="left:748.3px;top:728.29px;font-size:11px;color:#000;letter-spacing:-0.031px;">2017-08-01 09:39</span>
<span id="t141" class="t" style="left:868.0px;top:728.29px;font-size:11px;color:#000;width:8.0px;overflow:hidden;">M</span>
<div class="a" style="left:27.6px;top:766.0px;width:848.4px;height:1px;background:#e9e9e9;"></div>
<span id="t142" class="t" style="left:31.5px;top:748.29px;font-size:11px;color:#000;letter-spacing:-0.458px;">CBEST-104586</span>
<span id="t143" class="t" style="left:121.5px;top:748.29px;font-size:11px;color:#000;letter-spacing:-0.794px;">00C</span>
<span id="t144" class="t" style="left:201.5px;top:748.29px;font-size:11px;color:#000;letter-spacing:0.152px;">Concrete Pump Operators - class A - Apprentice - period 1</span>
<div class="a" style="left:628px;top:750.0px;width:13px;height:13px;box-sizing:border-box;border:1px solid #8e8f8f;background:linear-gradient(135deg,#c9ccd0 0%,#e4e5e7 50%,#fbfbfb 100%);box-shadow:inset 0 0 0 2px #f6f6f6;"></div>
<span id="t145" class="t" style="left:673.0px;top:748.29px;font-size:11px;color:#000;letter-spacing:0.036px;">Competence</span>
<span id="t146" class="t" style="left:748.3px;top:748.29px;font-size:11px;color:#000;letter-spacing:-0.031px;">2017-08-01 09:40</span>
<span id="t147" class="t" style="left:868.0px;top:748.29px;font-size:11px;color:#000;width:8.0px;overflow:hidden;">Ad</span>
<div class="a" style="left:27.6px;top:786.0px;width:848.4px;height:1px;background:#e9e9e9;"></div>
<span id="t148" class="t" style="left:31.5px;top:768.29px;font-size:11px;color:#000;letter-spacing:-0.458px;">CBEST-104585</span>
<span id="t149" class="t" style="left:121.5px;top:768.29px;font-size:11px;color:#000;letter-spacing:-0.794px;">00C</span>
<span id="t150" class="t" style="left:201.5px;top:768.29px;font-size:11px;color:#000;letter-spacing:0.040px;">Concrete Pump Operators - class B</span>
<div class="a" style="left:628px;top:770.0px;width:13px;height:13px;box-sizing:border-box;border:1px solid #8e8f8f;background:linear-gradient(135deg,#c9ccd0 0%,#e4e5e7 50%,#fbfbfb 100%);box-shadow:inset 0 0 0 2px #f6f6f6;"></div>
<span id="t151" class="t" style="left:673.0px;top:768.29px;font-size:11px;color:#000;letter-spacing:0.036px;">Competence</span>
<span id="t152" class="t" style="left:748.3px;top:768.29px;font-size:11px;color:#000;letter-spacing:-0.031px;">2017-08-01 09:39</span>
<span id="t153" class="t" style="left:868.0px;top:768.29px;font-size:11px;color:#000;width:8.0px;overflow:hidden;">Ad</span>
<div class="a" style="left:27.6px;top:806.0px;width:848.4px;height:1px;background:#e9e9e9;"></div>
<span id="t154" class="t" style="left:31.5px;top:788.29px;font-size:11px;color:#000;letter-spacing:-0.458px;">CBEST-104587</span>
<span id="t155" class="t" style="left:121.5px;top:788.29px;font-size:11px;color:#000;letter-spacing:-0.794px;">00C</span>
<span id="t156" class="t" style="left:201.5px;top:788.29px;font-size:11px;color:#000;letter-spacing:0.130px;">Concrete Pump Operators - class B - Apprentice - period 1</span>
<div class="a" style="left:628px;top:790.0px;width:13px;height:13px;box-sizing:border-box;border:1px solid #8e8f8f;background:linear-gradient(135deg,#c9ccd0 0%,#e4e5e7 50%,#fbfbfb 100%);box-shadow:inset 0 0 0 2px #f6f6f6;"></div>
<span id="t157" class="t" style="left:673.0px;top:788.29px;font-size:11px;color:#000;letter-spacing:0.036px;">Competence</span>
<span id="t158" class="t" style="left:748.3px;top:788.29px;font-size:11px;color:#000;letter-spacing:-0.031px;">2017-08-01 09:41</span>
<span id="t159" class="t" style="left:868.0px;top:788.29px;font-size:11px;color:#000;width:8.0px;overflow:hidden;">Ad</span>
<div class="a" style="left:27.6px;top:826.0px;width:848.4px;height:1px;background:#e9e9e9;"></div>
<span id="t160" class="t" style="left:31.5px;top:808.29px;font-size:11px;color:#000;letter-spacing:-0.384px;">CBEST-104611</span>
<span id="t161" class="t" style="left:121.5px;top:808.29px;font-size:11px;color:#000;letter-spacing:-0.794px;">00C</span>
<span id="t162" class="t" style="left:201.5px;top:808.29px;font-size:11px;color:#000;letter-spacing:0.196px;">Concrete Pump Operators (distribution mast) +42 M Apprentice</span>
<div class="a" style="left:628px;top:810.0px;width:13px;height:13px;box-sizing:border-box;border:1px solid #8e8f8f;background:linear-gradient(135deg,#c9ccd0 0%,#e4e5e7 50%,#fbfbfb 100%);box-shadow:inset 0 0 0 2px #f6f6f6;"></div>
<span id="t163" class="t" style="left:673.0px;top:808.29px;font-size:11px;color:#000;letter-spacing:0.036px;">Competence</span>
<span id="t164" class="t" style="left:748.3px;top:808.29px;font-size:11px;color:#000;letter-spacing:-0.031px;">2017-08-02 09:41</span>
<span id="t165" class="t" style="left:868.0px;top:808.29px;font-size:11px;color:#000;width:8.0px;overflow:hidden;">M</span>
<div class="a" style="left:27.6px;top:846.0px;width:848.4px;height:1px;background:#e9e9e9;"></div>
<span id="t166" class="t" style="left:31.5px;top:828.29px;font-size:11px;color:#000;letter-spacing:-0.458px;">CBEST-104610</span>
<span id="t167" class="t" style="left:121.5px;top:828.29px;font-size:11px;color:#000;letter-spacing:-0.794px;">00C</span>
<span id="t168" class="t" style="left:201.5px;top:828.29px;font-size:11px;color:#000;letter-spacing:0.219px;">Concrete Pump Operators (distribution mast) +42 M.</span>
<div class="a" style="left:628px;top:830.0px;width:13px;height:13px;box-sizing:border-box;border:1px solid #8e8f8f;background:linear-gradient(135deg,#c9ccd0 0%,#e4e5e7 50%,#fbfbfb 100%);box-shadow:inset 0 0 0 2px #f6f6f6;"></div>
<span id="t169" class="t" style="left:673.0px;top:828.29px;font-size:11px;color:#000;letter-spacing:0.036px;">Competence</span>
<span id="t170" class="t" style="left:748.3px;top:828.29px;font-size:11px;color:#000;letter-spacing:-0.031px;">2017-08-02 09:41</span>
<span id="t171" class="t" style="left:868.0px;top:828.29px;font-size:11px;color:#000;width:8.0px;overflow:hidden;">Ad</span>
<div class="a" style="left:27.6px;top:866.0px;width:848.4px;height:1px;background:#e9e9e9;"></div>
<span id="t172" class="t" style="left:31.5px;top:848.29px;font-size:11px;color:#000;letter-spacing:-0.458px;">CBEST-104608</span>
<span id="t173" class="t" style="left:121.5px;top:848.29px;font-size:11px;color:#000;letter-spacing:-0.794px;">00C</span>
<span id="t174" class="t" style="left:201.5px;top:848.29px;font-size:11px;color:#000;letter-spacing:0.190px;">Concrete Pump Operators (distribution mast) -42 M.</span>
<div class="a" style="left:628px;top:850.0px;width:13px;height:13px;box-sizing:border-box;border:1px solid #8e8f8f;background:linear-gradient(135deg,#c9ccd0 0%,#e4e5e7 50%,#fbfbfb 100%);box-shadow:inset 0 0 0 2px #f6f6f6;"></div>
<span id="t175" class="t" style="left:673.0px;top:848.29px;font-size:11px;color:#000;letter-spacing:0.036px;">Competence</span>
<span id="t176" class="t" style="left:748.3px;top:848.29px;font-size:11px;color:#000;letter-spacing:-0.031px;">2017-08-02 09:39</span>
<span id="t177" class="t" style="left:868.0px;top:848.29px;font-size:11px;color:#000;width:8.0px;overflow:hidden;">M</span>
<div class="a" style="left:27.6px;top:886.0px;width:848.4px;height:1px;background:#e9e9e9;"></div>
<span id="t178" class="t" style="left:31.5px;top:868.29px;font-size:11px;color:#000;letter-spacing:-0.458px;">CBEST-104609</span>
<span id="t179" class="t" style="left:121.5px;top:868.29px;font-size:11px;color:#000;letter-spacing:-0.794px;">00C</span>
<span id="t180" class="t" style="left:201.5px;top:868.29px;font-size:11px;color:#000;letter-spacing:0.171px;">Concrete Pump Operators (distribution mast) -42 M. Apprentice</span>
<div class="a" style="left:628px;top:870.0px;width:13px;height:13px;box-sizing:border-box;border:1px solid #8e8f8f;background:linear-gradient(135deg,#c9ccd0 0%,#e4e5e7 50%,#fbfbfb 100%);box-shadow:inset 0 0 0 2px #f6f6f6;"></div>
<span id="t181" class="t" style="left:673.0px;top:868.29px;font-size:11px;color:#000;letter-spacing:0.036px;">Competence</span>
<span id="t182" class="t" style="left:748.3px;top:868.29px;font-size:11px;color:#000;letter-spacing:-0.031px;">2017-08-02 09:40</span>
<span id="t183" class="t" style="left:868.0px;top:868.29px;font-size:11px;color:#000;width:8.0px;overflow:hidden;">Ad</span>
<div class="a" style="left:27.6px;top:906.0px;width:848.4px;height:1px;background:#e9e9e9;"></div>
<span id="t184" class="t" style="left:31.5px;top:888.29px;font-size:11px;color:#000;letter-spacing:-0.458px;">CBEST-102356</span>
<span id="t185" class="t" style="left:121.5px;top:888.29px;font-size:11px;color:#000;letter-spacing:-0.794px;">00C</span>
<span id="t186" class="t" style="left:201.5px;top:888.29px;font-size:11px;color:#000;letter-spacing:0.084px;">Crane Operator - class A</span>
<div class="a" style="left:628px;top:890.0px;width:13px;height:13px;box-sizing:border-box;border:1px solid #8e8f8f;background:linear-gradient(135deg,#c9ccd0 0%,#e4e5e7 50%,#fbfbfb 100%);box-shadow:inset 0 0 0 2px #f6f6f6;"></div>
<span id="t187" class="t" style="left:673.0px;top:888.29px;font-size:11px;color:#000;letter-spacing:0.036px;">Competence</span>
<span id="t188" class="t" style="left:748.3px;top:888.29px;font-size:11px;color:#000;letter-spacing:-0.031px;">2017-06-28 10:21</span>
<span id="t189" class="t" style="left:868.0px;top:888.29px;font-size:11px;color:#000;width:8.0px;overflow:hidden;">Ad</span>
<div class="a" style="left:8px;top:346px;width:19px;height:1px;background:#a0a0a0;"></div>
<div class="a" style="left:8px;top:365.5px;width:19px;height:1px;background:#a0a0a0;"></div>
<div class="a" style="left:8px;top:346.5px;width:19px;height:1px;background:#fff;"></div>
<div class="a" style="left:8px;top:385.5px;width:19px;height:1px;background:#a0a0a0;"></div>
<div class="a" style="left:8px;top:366.5px;width:19px;height:1px;background:#fff;"></div>
<div class="a" style="left:8px;top:405.5px;width:19px;height:1px;background:#a0a0a0;"></div>
<div class="a" style="left:8px;top:386.5px;width:19px;height:1px;background:#fff;"></div>
<div class="a" style="left:8px;top:425.5px;width:19px;height:1px;background:#a0a0a0;"></div>
<div class="a" style="left:8px;top:406.5px;width:19px;height:1px;background:#fff;"></div>
<div class="a" style="left:8px;top:445.5px;width:19px;height:1px;background:#a0a0a0;"></div>
<div class="a" style="left:8px;top:426.5px;width:19px;height:1px;background:#fff;"></div>
<div class="a" style="left:8px;top:465.5px;width:19px;height:1px;background:#a0a0a0;"></div>
<div class="a" style="left:8px;top:446.5px;width:19px;height:1px;background:#fff;"></div>
<div class="a" style="left:8px;top:485.5px;width:19px;height:1px;background:#a0a0a0;"></div>
<div class="a" style="left:8px;top:466.5px;width:19px;height:1px;background:#fff;"></div>
<div class="a" style="left:8px;top:505.5px;width:19px;height:1px;background:#a0a0a0;"></div>
<div class="a" style="left:8px;top:486.5px;width:19px;height:1px;background:#fff;"></div>
<div class="a" style="left:8px;top:525.5px;width:19px;height:1px;background:#a0a0a0;"></div>
<div class="a" style="left:8px;top:506.5px;width:19px;height:1px;background:#fff;"></div>
<div class="a" style="left:8px;top:545.5px;width:19px;height:1px;background:#a0a0a0;"></div>
<div class="a" style="left:8px;top:526.5px;width:19px;height:1px;background:#fff;"></div>
<div class="a" style="left:8px;top:565.5px;width:19px;height:1px;background:#a0a0a0;"></div>
<div class="a" style="left:8px;top:546.5px;width:19px;height:1px;background:#fff;"></div>
<div class="a" style="left:8px;top:585.5px;width:19px;height:1px;background:#a0a0a0;"></div>
<div class="a" style="left:8px;top:566.5px;width:19px;height:1px;background:#fff;"></div>
<div class="a" style="left:8px;top:605.5px;width:19px;height:1px;background:#a0a0a0;"></div>
<div class="a" style="left:8px;top:586.5px;width:19px;height:1px;background:#fff;"></div>
<div class="a" style="left:8px;top:625.5px;width:19px;height:1px;background:#a0a0a0;"></div>
<div class="a" style="left:8px;top:606.5px;width:19px;height:1px;background:#fff;"></div>
<div class="a" style="left:8px;top:645.5px;width:19px;height:1px;background:#a0a0a0;"></div>
<div class="a" style="left:8px;top:626.5px;width:19px;height:1px;background:#fff;"></div>
<div class="a" style="left:8px;top:665.5px;width:19px;height:1px;background:#a0a0a0;"></div>
<div class="a" style="left:8px;top:646.5px;width:19px;height:1px;background:#fff;"></div>
<div class="a" style="left:8px;top:685.5px;width:19px;height:1px;background:#a0a0a0;"></div>
<div class="a" style="left:8px;top:666.5px;width:19px;height:1px;background:#fff;"></div>
<div class="a" style="left:8px;top:705.5px;width:19px;height:1px;background:#a0a0a0;"></div>
<div class="a" style="left:8px;top:686.5px;width:19px;height:1px;background:#fff;"></div>
<div class="a" style="left:8px;top:725.5px;width:19px;height:1px;background:#a0a0a0;"></div>
<div class="a" style="left:8px;top:706.5px;width:19px;height:1px;background:#fff;"></div>
<div class="a" style="left:8px;top:745.5px;width:19px;height:1px;background:#a0a0a0;"></div>
<div class="a" style="left:8px;top:726.5px;width:19px;height:1px;background:#fff;"></div>
<div class="a" style="left:8px;top:765.5px;width:19px;height:1px;background:#a0a0a0;"></div>
<div class="a" style="left:8px;top:746.5px;width:19px;height:1px;background:#fff;"></div>
<div class="a" style="left:8px;top:785.5px;width:19px;height:1px;background:#a0a0a0;"></div>
<div class="a" style="left:8px;top:766.5px;width:19px;height:1px;background:#fff;"></div>
<div class="a" style="left:8px;top:805.5px;width:19px;height:1px;background:#a0a0a0;"></div>
<div class="a" style="left:8px;top:786.5px;width:19px;height:1px;background:#fff;"></div>
<div class="a" style="left:8px;top:825.5px;width:19px;height:1px;background:#a0a0a0;"></div>
<div class="a" style="left:8px;top:806.5px;width:19px;height:1px;background:#fff;"></div>
<div class="a" style="left:8px;top:845.5px;width:19px;height:1px;background:#a0a0a0;"></div>
<div class="a" style="left:8px;top:826.5px;width:19px;height:1px;background:#fff;"></div>
<div class="a" style="left:8px;top:865.5px;width:19px;height:1px;background:#a0a0a0;"></div>
<div class="a" style="left:8px;top:846.5px;width:19px;height:1px;background:#fff;"></div>
<div class="a" style="left:8px;top:885.5px;width:19px;height:1px;background:#a0a0a0;"></div>
<div class="a" style="left:8px;top:866.5px;width:19px;height:1px;background:#fff;"></div>
<div class="a" style="left:8px;top:905.5px;width:19px;height:1px;background:#a0a0a0;"></div>
<div class="a" style="left:8px;top:886.5px;width:19px;height:1px;background:#fff;"></div>
<div class="a" style="left:8px;top:925.5px;width:19px;height:1px;background:#a0a0a0;"></div>
<div class="a" style="left:8px;top:906.5px;width:19px;height:1px;background:#fff;"></div>
<div class="a" style="left:26.5px;top:327px;width:1px;height:581px;background:#a0a0a0;"></div>
<span id="t190" class="t" style="left:907.8px;top:194.79px;font-size:11px;color:#444;letter-spacing:0.234px;">Code</span>
<span id="t191" class="t" style="left:1035.5px;top:194.89px;font-size:11px;color:#444;letter-spacing:-0.315px;">Name</span>
<div class="a" style="left:901px;top:213px;width:123px;height:1.3px;background:#8c8c8c;"></div>
<div class="a" style="left:901px;top:213px;width:1.3px;height:21px;background:#8c8c8c;"></div>
<div class="a" style="left:1033px;top:213px;width:831px;height:1.3px;background:#8c8c8c;"></div>
<div class="a" style="left:1033px;top:213px;width:1.3px;height:21px;background:#8c8c8c;"></div>
<span id="t192" class="t" style="left:904.5px;top:216.04px;font-size:12px;color:#333;font-weight:bold;letter-spacing:0.010px;">CBEST-108411</span>
<span id="t193" class="t" style="left:1036.8px;top:215.64px;font-size:12px;color:#333;font-weight:bold;letter-spacing:-0.426px;">Bidding Template Sample SV</span>
<div class="a" style="left:901px;top:241px;width:123px;height:21px;background:#f0f0f0;border-top:1px solid #c2c2c2;border-left:1px solid #b2b2b2;box-sizing:border-box;"></div>
<div class="a" style="left:1024px;top:241px;width:416px;height:21px;background:#232a36;"></div>
<span id="t194" class="t" style="left:912.4px;top:243.79px;font-size:11px;color:#000;letter-spacing:-0.147px;">Desc. / Classification</span>
<span id="t195" class="t" style="left:1033.6px;top:243.79px;font-size:11px;color:#fff;letter-spacing:-0.136px;">Settings</span>
<span id="t196" class="t" style="left:1094.7px;top:243.79px;font-size:11px;color:#fff;letter-spacing:-0.215px;">Cost price</span>
<span id="t197" class="t" style="left:1164.7px;top:243.79px;font-size:11px;color:#fff;letter-spacing:-0.354px;">Equivalence</span>
<span id="t198" class="t" style="left:1243.8px;top:243.79px;font-size:11px;color:#fff;letter-spacing:-0.622px;">Selling</span>
<span id="t199" class="t" style="left:1295.7px;top:243.79px;font-size:11px;color:#fff;letter-spacing:-0.574px;">Usage</span>
<span id="t200" class="t" style="left:1347.6px;top:243.79px;font-size:11px;color:#fff;letter-spacing:-0.179px;">Revisions control</span>
<div class="a" style="left:948.2px;top:207.9px;width:28.8px;height:28.8px;background:#8a0101;border-radius:50%;"></div>
<span id="t201" class="t" style="left:958.0px;top:214.18px;font-size:16.5px;color:#fff;">1</span>
<div class="a" style="left:1043.0px;top:207.1px;width:28.8px;height:28.8px;background:#8a0101;border-radius:50%;"></div>
<span id="t202" class="t" style="left:1052.8000000000002px;top:213.38px;font-size:16.5px;color:#fff;">2</span>
<div class="a" style="left:1104.0px;top:208.0px;width:28.8px;height:28.8px;background:#8a0101;border-radius:50%;"></div>
<span id="t203" class="t" style="left:1113.8000000000002px;top:214.28px;font-size:16.5px;color:#fff;">3</span>
<div class="a" style="left:1182.3999999999999px;top:208.0px;width:28.8px;height:28.8px;background:#8a0101;border-radius:50%;"></div>
<span id="t204" class="t" style="left:1192.2px;top:214.28px;font-size:16.5px;color:#fff;">4</span>
<div class="a" style="left:1241.1px;top:207.0px;width:28.8px;height:28.8px;background:#8a0101;border-radius:50%;"></div>
<span id="t205" class="t" style="left:1250.9px;top:213.28px;font-size:16.5px;color:#fff;">5</span>
<div class="a" style="left:1297.0px;top:208.0px;width:28.8px;height:28.8px;background:#8a0101;border-radius:50%;"></div>
<span id="t206" class="t" style="left:1306.8000000000002px;top:214.28px;font-size:16.5px;color:#fff;">6</span>
<div class="a" style="left:1374.1px;top:208.0px;width:28.8px;height:28.8px;background:#8a0101;border-radius:50%;"></div>
<span id="t207" class="t" style="left:1383.9px;top:214.28px;font-size:16.5px;color:#fff;">7</span>
<span id="t208" class="t" style="left:913.4px;top:281.99px;font-size:11px;color:#444;letter-spacing:-0.286px;">Type</span>
<span id="t209" class="t" style="left:913.4px;top:307.59px;font-size:11px;color:#444;letter-spacing:0.116px;">Sorting Code</span>
<span id="t210" class="t" style="left:913.4px;top:332.59px;font-size:11px;color:#444;letter-spacing:0.234px;">Code</span>
<span id="t211" class="t" style="left:913.4px;top:362.19px;font-size:11px;color:#444;letter-spacing:-0.281px;">Name</span>
<span id="t212" class="t" style="left:913.4px;top:404.79px;font-size:11px;color:#444;letter-spacing:0.326px;">Identification</span>
<span id="t213" class="t" style="left:913.4px;top:485.19px;font-size:11px;color:#444;letter-spacing:0.247px;">Description</span>
<span id="t214" class="t" style="left:913.4px;top:618.79px;font-size:11px;color:#444;letter-spacing:0.239px;">Estimation unit</span>
<span id="t215" class="t" style="left:913.4px;top:644.99px;font-size:11px;color:#444;letter-spacing:0.256px;">Item creator</span>
<span id="t216" class="t" style="left:913.4px;top:589.39px;font-size:11px;color:#444;letter-spacing:0.214px;width:86.5px;overflow:hidden;">Management unit</span>
<span id="t217" class="t" style="left:913.4px;top:431.89px;font-size:11px;color:#0000ee;letter-spacing:0.094px;text-decoration:underline;">Specification</span>
<span id="t218" class="t" style="left:913.4px;top:672.59px;font-size:11px;color:#0000ee;letter-spacing:0.091px;text-decoration:underline;">Classification</span>
<div class="a" style="left:1000px;top:282px;width:120px;height:21px;background:#f0f0f0;border:1px solid #acb4bd;box-sizing:border-box;"></div>
<div class="a" style="left:1104px;top:283px;width:15px;height:19px;background:#fff;"></div>
<svg class="a" style="left:1108.6px;top:290.1px;" width="6" height="4" viewBox="0 0 6 4"><path d="M0.2 0.2 H5.6 L2.9 3.3 Z" fill="#a2a2a2"/></svg>
<span id="t219" class="t" style="left:1003.4px;top:283.99px;font-size:11px;color:#000;letter-spacing:-0.242px;">Model</span>
<div class="a" style="left:1146px;top:282px;width:114px;height:22px;background:#f0f0f0;border:1px solid #adadad;box-sizing:border-box;"></div>
<span id="t220" class="t" style="left:1171.6px;top:285.09px;font-size:11px;color:#000;letter-spacing:0.221px;">Catalog item</span>
<div class="a" style="left:1000px;top:309px;width:260px;height:19px;background:#f0f0f0;border:1px solid #a6a6a6;box-sizing:border-box;"></div>
<span id="t221" class="t" style="left:1001.6px;top:310.09px;font-size:11px;color:#000;letter-spacing:-0.850px;">00</span>
<div class="a" style="left:1000px;top:334px;width:260px;height:19px;background:#f0f0f0;border:1px solid #a6a6a6;box-sizing:border-box;"></div>
<span id="t222" class="t" style="left:1001.6px;top:335.19px;font-size:11px;color:#000;letter-spacing:-0.402px;">CBEST-108411</span>
<div class="a" style="left:1000px;top:364px;width:260px;height:34px;background:#f0f0f0;border:1px solid #a6a6a6;box-sizing:border-box;"></div>
<span id="t223" class="t" style="left:1001.6px;top:365.19px;font-size:11px;color:#000;letter-spacing:-0.387px;">Bidding Template Sample SV</span>
<div class="a" style="left:1242.4px;top:365px;width:1px;height:32px;background:#fafafa;"></div>
<svg class="a" style="left:1246px;top:369px;" width="10" height="8" viewBox="0 0 10 8"><path d="M1.2 5.6 L4.5 1.9 L7.8 5.6" stroke="#c2c2c2" stroke-width="2" fill="none"/></svg>
<svg class="a" style="left:1246px;top:384.5px;" width="10" height="8" viewBox="0 0 10 8"><path d="M1.2 1.6 L4.5 5.3 L7.8 1.6" stroke="#c2c2c2" stroke-width="2" fill="none"/></svg>
<div class="a" style="left:1000px;top:404px;width:260px;height:19px;background:#f0f0f0;border:1px solid #a6a6a6;box-sizing:border-box;"></div>
<div class="a" style="left:1000px;top:433px;width:240px;height:43.5px;background:#f0f0f0;border:1px solid #a6a6a6;box-sizing:border-box;"></div>
<div class="a" style="left:1239.5px;top:432px;width:20.3px;height:20.4px;background:#f0f0f0;border:1px solid;border-color:#fff #696969 #696969 #fff;box-sizing:border-box;box-shadow:inset -1px -1px 0 #a0a0a0;"></div>
<span id="t224" class="t" style="left:1244.7px;top:434.49px;font-size:11px;color:#9a9a9a;letter-spacing:0.514px;">...</span>
<div class="a" style="left:1239.5px;top:456.4px;width:20.3px;height:20.1px;background:#f0f0f0;border:1px solid;border-color:#fff #696969 #696969 #fff;box-sizing:border-box;box-shadow:inset -1px -1px 0 #a0a0a0;"></div>
<span id="t225" class="t" style="left:1246.9px;top:458.49px;font-size:11px;color:#9a9a9a;transform:scaleX(0.84);transform-origin:0 0;">X</span>
<div class="a" style="left:1000px;top:484px;width:260px;height:98.5px;background:#f0f0f0;border:1px solid #a6a6a6;box-sizing:border-box;"></div>
<div class="a" style="left:1242.4px;top:485px;width:1px;height:96.5px;background:#fafafa;"></div>
<svg class="a" style="left:1246px;top:489.5px;" width="10" height="8" viewBox="0 0 10 8"><path d="M1.2 5.6 L4.5 1.9 L7.8 5.6" stroke="#c2c2c2" stroke-width="2" fill="none"/></svg>
<svg class="a" style="left:1246px;top:570px;" width="10" height="8" viewBox="0 0 10 8"><path d="M1.2 1.6 L4.5 5.3 L7.8 1.6" stroke="#c2c2c2" stroke-width="2" fill="none"/></svg>
<div class="a" style="left:1000px;top:590px;width:97px;height:19.5px;background:#f0f0f0;border:1px solid #acb4bd;box-sizing:border-box;"></div>
<div class="a" style="left:1001.6px;top:591.8px;width:78.6px;height:16px;background:#f9f9f9;border:1px solid #e2e2e2;box-sizing:border-box;"></div>
<svg class="a" style="left:1085.2px;top:597.2px;" width="6" height="4" viewBox="0 0 6 4"><path d="M0.2 0.2 H5.6 L2.9 3.4 Z" fill="#a2a2a2"/></svg>
<span id="t226" class="t" style="left:1002.7px;top:591.99px;font-size:11px;color:#7a7a7a;letter-spacing:-0.250px;">unit</span>
<div class="a" style="left:1098.5px;top:590.5px;width:21.5px;height:19px;background:#f3f3f3;"></div>
<span id="t227" class="t" style="left:1103.5px;top:591.69px;font-size:11px;color:#b0b0b0;">...</span>
<span id="t228" class="t" style="left:1127.5px;top:594.59px;font-size:11px;color:#333;">=</span>
<div class="a" style="left:1000px;top:617.3px;width:97.6px;height:19px;background:#fff;border:1px solid #acb4bd;border-right:1.6px solid #8c8c8c;box-sizing:border-box;"></div>
<svg class="a" style="left:1085.2px;top:623.6px;" width="6" height="4" viewBox="0 0 6 4"><path d="M0.2 0.2 H5.6 L2.9 3.4 Z" fill="#a2a2a2"/></svg>
<div class="a" style="left:1097.6px;top:617.3px;width:22.4px;height:19px;background:#ececec;"></div>
<span id="t229" class="t" style="left:1103.5px;top:618.49px;font-size:11px;color:#555;">...</span>
<div class="a" style="left:1139.3px;top:617.3px;width:67.7px;height:19px;background:#f0f0f0;border:1px solid #a6a6a6;box-sizing:border-box;"></div>
<div class="a" style="left:1000px;top:644.3px;width:260px;height:18.5px;background:#fff;border:1px solid #a6a6a6;box-sizing:border-box;"></div>
<span id="t230" class="t" style="left:1002.0px;top:645.19px;font-size:11px;color:#000;letter-spacing:-0.301px;">Alain Gauthier</span>
<div class="a" style="left:1000px;top:671.3px;width:240px;height:42.5px;background:#f0f0f0;border:1px solid #a6a6a6;box-sizing:border-box;"></div>
<div class="a" style="left:1239.5px;top:671px;width:20.3px;height:19.6px;background:#f0f0f0;border:1px solid;border-color:#fff #696969 #696969 #fff;box-sizing:border-box;box-shadow:inset -1px -1px 0 #a0a0a0;"></div>
<span id="t231" class="t" style="left:1244.7px;top:672.79px;font-size:11px;color:#9a9a9a;letter-spacing:0.514px;">...</span>
<div class="a" style="left:1239.5px;top:691.2px;width:20.3px;height:19px;background:#f0f0f0;border:1px solid;border-color:#fff #696969 #696969 #fff;box-sizing:border-box;box-shadow:inset -1px -1px 0 #a0a0a0;"></div>
<span id="t232" class="t" style="left:1246.9px;top:693.19px;font-size:11px;color:#9a9a9a;transform:scaleX(0.84);transform-origin:0 0;">X</span>
<div class="a" style="left:1001px;top:728px;width:239px;height:55px;background:#fff;border:1px solid #a0a0a0;box-sizing:border-box;"></div>
<span id="t233" class="t" style="left:1082.9px;top:748.14px;font-size:12px;color:#333;font-weight:bold;letter-spacing:-0.308px;">See assembly</span>
<div class="a" style="left:1282.4px;top:304px;width:582px;height:605px;border-top:1px solid #555;border-left:1px solid #555;box-sizing:border-box;"></div>
<div class="a" style="left:1287px;top:282px;width:138.5px;height:23px;background:#fff;border:1px solid #444;border-bottom:none;border-radius:4px 4px 0 0;box-sizing:border-box;"></div>
<div class="a" style="left:1425.5px;top:282.3px;width:81.5px;height:21.2px;background:#232a36;border-radius:0 4px 0 0;"></div>
<span id="t234" class="t" style="left:1295.4px;top:284.69px;font-size:11px;color:#333;letter-spacing:0.149px;">images - fichier attachés</span>
<span id="t235" class="t" style="left:1433.7px;top:284.69px;font-size:11px;color:#fff;letter-spacing:0.270px;">Internal note</span>
<div class="a" style="left:1364px;top:314px;width:1px;height:22px;background:#6a6a6a;"></div>
<div class="a" style="left:1463px;top:314px;width:1px;height:22px;background:#6a6a6a;"></div>
<div class="a" style="left:1514px;top:314px;width:1px;height:22px;background:#6a6a6a;"></div>
<div class="a" style="left:1661px;top:314px;width:1px;height:22px;background:#6a6a6a;"></div>
<span id="t236" class="t" style="left:1667.4px;top:317.49px;font-size:11px;color:#444;letter-spacing:0.392px;">List</span>
<div class="a" style="left:1291.2px;top:345.3px;width:477px;height:563.5px;background:#ababab;"></div>
<div class="a" style="left:1291.2px;top:345.3px;width:469.8px;height:20.5px;background:#232a36;"></div>
<div class="a" style="left:1311.0px;top:346px;width:1.3px;height:19.5px;background:#dcdcdc;"></div>
<div class="a" style="left:1461.0px;top:346px;width:1.3px;height:19.5px;background:#dcdcdc;"></div>
<div class="a" style="left:1530.9px;top:346px;width:1.3px;height:19.5px;background:#dcdcdc;"></div>
<div class="a" style="left:1630.9px;top:346px;width:1.3px;height:19.5px;background:#dcdcdc;"></div>
<div class="a" style="left:1680.7px;top:346px;width:1.3px;height:19.5px;background:#dcdcdc;"></div>
<span id="t237" class="t" style="left:1370.1px;top:347.89px;font-size:11px;color:#fff;font-weight:bold;letter-spacing:1.210px;">Name</span>
<span id="t238" class="t" style="left:1483.2px;top:347.89px;font-size:11px;color:#fff;font-weight:bold;letter-spacing:0.580px;">Type</span>
<span id="t239" class="t" style="left:1568.6px;top:347.89px;font-size:11px;color:#fff;font-weight:bold;letter-spacing:0.882px;">Note</span>
<span id="t240" class="t" style="left:1644.2px;top:347.89px;font-size:11px;color:#fff;font-weight:bold;letter-spacing:0.477px;">User</span>
<span id="t241" class="t" style="left:1687.4px;top:347.89px;font-size:11px;color:#fff;font-weight:bold;letter-spacing:0.653px;">Update date</span>
<div class="a" style="left:1761px;top:345.3px;width:1.1px;height:61px;background:#f4f4f4;"></div>
<div class="a" style="left:1768px;top:345.3px;width:1px;height:563.7px;background:#7c7c7c;"></div>
<div class="a" style="left:1769px;top:345.3px;width:3px;height:563.7px;background:#98b1d1;"></div>
<div class="a" style="left:1291.5px;top:366px;width:470px;height:20px;background:#dff3f1;"></div>
<div class="a" style="left:1291.5px;top:366px;width:20px;height:20px;background:#f0f0f0;border-right:1px solid #a0a0a0;border-bottom:1px solid #a0a0a0;box-sizing:border-box;"></div>
<div class="a" style="left:1291.5px;top:386px;width:470px;height:19.6px;background:#fff;"></div>
<div class="a" style="left:1312px;top:386px;width:449.5px;height:2px;background:#000;"></div>
<div class="a" style="left:1312px;top:403.4px;width:449.5px;height:2.2px;background:#000;"></div>
<div class="a" style="left:1291.5px;top:386px;width:20px;height:19.6px;background:#f0f0f0;border-right:1px solid #a0a0a0;border-bottom:1px solid #a0a0a0;box-sizing:border-box;"></div>
<div class="a" style="left:1291.5px;top:405.6px;width:470px;height:1px;background:#c8c8c8;"></div>
<span id="t242" class="t" style="left:1315.2px;top:387.79px;font-size:11px;color:#000;">Rapports personnalisés CBE. Excel</span>
<span id="t243" class="t" style="left:1635.1px;top:387.79px;font-size:11px;color:#000;letter-spacing:-0.132px;width:45.5px;overflow:hidden;">Alain Gauthier</span>
<span id="t244" class="t" style="left:1685.4px;top:387.79px;font-size:11px;color:#000;letter-spacing:-0.131px;">2021-07-01</span>
<svg class="a" style="left:0;top:0;" width="1873" height="918" viewBox="0 0 1873 918"><g transform="translate(31.25,25.0) scale(0.86,0.758)" fill="none" stroke="#94d60b" stroke-width="6.72" stroke-linejoin="miter" stroke-linecap="butt"><polyline points="-13.52,-6.78 -20.3,0 -10.15,10.15 -3.37,3.37"/><polyline points="-12.525,-12.525 10.15,10.15 20.3,0 10.15,-10.15 3.37,-3.37"/></g>
<g transform="translate(600.9,100.85) scale(0.994,0.997)" fill="none" stroke="#efc502" stroke-width="6.72" stroke-linejoin="miter" stroke-linecap="butt"><polyline points="-13.52,-6.78 -20.3,0 -10.15,10.15 -3.37,3.37"/><polyline points="-12.525,-12.525 10.15,10.15 20.3,0 10.15,-10.15 3.37,-3.37"/></g>
<g transform="translate(655.0,92.0) scale(0.639,0.624)" fill="none" stroke="#ff8208" stroke-width="6.72" stroke-linejoin="miter" stroke-linecap="butt"><polyline points="-13.52,-6.78 -20.3,0 -10.15,10.15 -3.37,3.37"/><polyline points="-12.525,-12.525 10.15,10.15 20.3,0 10.15,-10.15 3.37,-3.37"/></g>
<path d="M651.8,127.7 H657.2 L654.5,130.5 Z" fill="#333"/>
<rect x="33" y="82.4" width="17" height="9" rx="2.2" fill="#0d2231"/><rect x="35.8" y="85.4" width="11.4" height="3.2" fill="#fff"/><rect x="18.1" y="88.3" width="46.8" height="32.4" rx="2.6" fill="#0d2231"/><rect x="21" y="97.3" width="41.1" height="2.8" fill="#fff"/><rect x="27" y="99.5" width="5.8" height="6.6" rx="0.8" fill="#fff"/><rect x="50.4" y="99.5" width="5.8" height="6.6" rx="0.8" fill="#fff"/>
<g fill="#0d2231"><ellipse cx="105.6" cy="90.6" rx="8" ry="11.6"/><path d="M87.7,113.9 C89,108.3 95.5,105 101.5,103.6 L101.5,98 H110 V113.9 Z"/></g><g fill="#0d2231" stroke="#fff" stroke-width="3.8" paint-order="stroke"><path d="M98.2,121.9 C99.3,115.5 105.5,112.6 111.6,111.4 C112.8,110.8 112.9,109.4 112.6,108.2 C110,105.5 108.8,101.5 108.8,98 C108.8,91.5 112,87.3 116.9,87.3 C121.8,87.3 125,91.5 125,98 C125,101.5 123.8,105.5 121.2,108.2 C120.9,109.4 121,110.8 122.2,111.4 C128.3,112.6 134.5,115.5 135.6,121.9 Z"/></g><rect x="97" y="121.95" width="40" height="3" fill="#fff"/><rect x="86" y="113.95" width="14" height="3" fill="#fff"/>
<g fill="#0d2231"><path d="M160,82.1 H187.4 Q189.6,82.1 189.6,84.3 V91.3 H199 L204.6,102.4 V111.6 H159.6 L157.3,109.3 V84.8 Q157.3,82.1 160,82.1 Z"/><circle cx="169.1" cy="115.3" r="6"/><circle cx="195.7" cy="115.3" r="6"/></g><path d="M189.9,94 H195.6 L200,103 H189.9 Z" fill="#fff"/>
<g fill="#0d2231"><path d="M240.2,89 C241.2,85.2 244,81.8 247.7,80 L253.9,80 C257.6,81.8 260.4,85.2 261.4,89 Z"/><rect x="239.7" y="88.6" width="22.2" height="3.5" rx="0.6"/><rect x="247.6" y="77.9" width="6.4" height="12" rx="1.2" stroke="#86929a" stroke-width="0.8"/><path d="M241.4,94 H260.2 C261.6,94.6 261.6,97.2 260,97.9 C259,103 255,106.3 250.8,106.3 C246.6,106.3 242.6,103 241.6,97.9 C240,97.2 240,94.6 241.4,94 Z"/><path d="M233.3,123.6 V114.5 C233.3,109.8 236,107.8 239.6,107.8 H243.4 L245,106.3 C248,108.8 253.6,108.8 256.6,106.3 L258.2,107.8 H262 C265.6,107.8 268.1,109.8 268.1,114.5 V123.6 Z"/></g>
<g fill="#0d2231"><rect x="315.3" y="108.8" width="29.8" height="10.7" rx="5.35"/><path d="M324,85.3 H334.6 V95.9 H336.9 V93.3 H338.9 V95.9 H342.4 Q344.2,95.9 344.2,97.7 V105.9 Q344.2,107.7 342.4,107.7 H318.6 L306.6,90.4 L312,86.9 L318.2,95.8 V92.6 Z"/><path d="M298.2,104 L299.3,101.3 H303.6 L312.9,112.8 H300.5 Q297.6,112.6 297.8,110 Z"/></g><path d="M309.3,88.8 L301.6,98.2" stroke="#0d2231" stroke-width="2.6"/><circle cx="309.3" cy="88.8" r="3.2" fill="#0d2231"/><circle cx="309.3" cy="88.8" r="1.3" fill="#fff"/><circle cx="301.6" cy="98.3" r="2.4" fill="#0d2231"/><circle cx="301.6" cy="98.3" r="1" fill="#fff"/><path d="M319.9,94.4 L325.1,87.7 H332.6 V97.8 L329.6,100.4 H319.9 Z" fill="#fff"/><rect x="316.9" y="110.4" width="26.6" height="7.5" rx="3.75" fill="#fff"/><g fill="#0d2231"><circle cx="320.6" cy="114.15" r="2.6"/><circle cx="327.1" cy="114.15" r="2.6"/><circle cx="333.6" cy="114.15" r="2.6"/><circle cx="340" cy="114.15" r="2.6"/></g>
<path d="M376.6,79.1 H404.7 V112.4 H378.2 A4.2,4.2 0 0 0 378.2,120.8 H407 V84.7 H410.1 V123.6 H376.6 A4.8,4.8 0 0 1 371.8,118.8 V83.9 A4.8,4.8 0 0 1 376.6,79.1 Z" fill="#0d2231"/><rect x="377.4" y="115.2" width="27" height="2.8" rx="1.4" fill="#0d2231"/>
<rect x="442.7" y="78.7" width="37.5" height="45.2" rx="3.6" fill="#0d2231"/><rect x="449" y="86" width="25.1" height="3.2" fill="#fff"/><rect x="449" y="95.4" width="25.1" height="3.3" fill="#fff"/><path d="M449,104.9 H473.6 L471,108.1 H449 Z" fill="#fff"/>
<rect x="512.7" y="78.7" width="37.5" height="45.2" rx="3.6" fill="#0d2231"/><rect x="519" y="86" width="25.1" height="3.2" fill="#fff"/><rect x="519" y="95.4" width="25.1" height="3.3" fill="#fff"/><path d="M519,104.9 H543.6 L541,108.1 H519 Z" fill="#fff"/>
<circle cx="472.6" cy="116.1" r="6" fill="#fff"/><path d="M469.2,116.4 L471.7,118.9 L476.2,113.3" stroke="#0d2231" stroke-width="1.2" fill="none"/>
<text transform="translate(544.3,120.5) scale(0.86,1)" x="0" y="0" font-family="Liberation Sans, sans-serif" font-size="16" font-weight="bold" fill="#fff" text-anchor="middle">$</text>
<path d="M27.5,175.8 H15.6 V180.3 M15.6,185.2 V188.1 H21.3" stroke="#0d2231" stroke-width="1.5" fill="none"/><path d="M21.2,178.3 L27.6,175.2 V188.7 L21.2,191.9 Z" fill="#0d2231"/><path d="M11.8,182.8 H17" stroke="#0d2231" stroke-width="2.1"/><path d="M16.2,179.5 L20,182.8 L16.2,186.1 Z" fill="#0d2231"/>
<rect x="47.35" y="176.1" width="3.8" height="14.5" rx="0.7" fill="#0d2231"/><rect x="42.1" y="181.45" width="14.2" height="3.8" rx="0.7" fill="#0d2231"/>
<g fill="#000"><rect x="68.9" y="174.3" width="8.5" height="8.9"/><path d="M65.9,183 H80.1 L73,189.5 Z"/><rect x="66.7" y="190" width="13.3" height="1.9"/></g><rect x="72.45" y="175.7" width="1.5" height="6.2" fill="#fff"/><rect x="70.1" y="178.05" width="6.2" height="1.5" fill="#fff"/>
<g transform="translate(88.4,191.8) rotate(-45)"><path d="M0,0 L5.2,-2.6 H17.6 V2.6 H5.2 Z" fill="#0d2231"/><rect x="6.6" y="-0.55" width="9.6" height="1.1" fill="#fff"/><path d="M18.7,-2.6 H21 A2.6,2.6 0 0 1 21,2.6 H18.7 Z" fill="#0d2231"/></g>
<path d="M114.9,176.9 H125.4 L127.5,179 V189.4 H114.9 Z" stroke="#ababab" stroke-width="1.6" fill="none"/><rect x="117.2" y="176.9" width="7.2" height="5" fill="#ababab"/><rect x="121.3" y="177.8" width="1.7" height="2.9" fill="#fff"/>
<path d="M139.5,181.4 L144.9,176.1 V179.6 C150.5,179.6 153.2,184.3 149.4,190.4 C150.3,186.4 148.6,183.4 144.9,183.3 V186.7 Z" fill="#ababab"/>
<g transform="translate(160,174) scale(1.0)"><rect x="0" y="2.3" width="18" height="2.6" rx="1.1" fill="#0d2231"/><path d="M6.6,2.5 V0.7 H11.4 V2.5" stroke="#0d2231" stroke-width="1.4" fill="none"/><rect x="7.3" y="1.3" width="3.4" height="1.1" fill="#a9b2b8"/><path d="M1.4,6.1 H16.6 V16 Q16.6,17.9 14.7,17.9 H3.3 Q1.4,17.9 1.4,16 Z" fill="#0d2231"/><g fill="#b9c1c6"><rect x="4.2" y="8" width="1.4" height="7.4"/><rect x="7.0" y="8" width="1.4" height="7.4"/><rect x="9.8" y="8" width="1.4" height="7.4"/><rect x="12.6" y="8" width="1.4" height="7.4"/></g></g>
<rect x="191" y="174.2" width="3" height="17.7" fill="#ababab"/>
<polyline points="206.3,175.35000000000002 198.2,183.05 206.3,190.75" stroke="#ababab" stroke-width="3.5" fill="none" stroke-linejoin="miter"/>
<polyline points="228.2,175.35000000000002 220.2,183.05 228.2,190.75" stroke="#ababab" stroke-width="3.5" fill="none" stroke-linejoin="miter"/>
<polyline points="242.9,175.35000000000002 250.9,183.05 242.9,190.75" stroke="#0d2231" stroke-width="3.6" fill="none" stroke-linejoin="miter"/>
<polyline points="264.2,175.35000000000002 272.2,183.05 264.2,190.75" stroke="#0d2231" stroke-width="3.6" fill="none" stroke-linejoin="miter"/>
<rect x="275.9" y="174.2" width="3.9" height="17.7" fill="#0d2231"/>
<path d="M294.96,184.13 A6.3,6.3 0 0 1 306.76,180.29" stroke="#0d2231" stroke-width="1.5" fill="none"/><path d="M307.44,182.37 A6.3,6.3 0 0 1 295.64,186.21" stroke="#0d2231" stroke-width="1.5" fill="none"/><path d="M308.60,176.35 V181.52 H303.43 Z" fill="#0d2231"/><path d="M293.80,190.15 V184.98 H298.97 Z" fill="#0d2231"/>
<rect x="318.8" y="177.5" width="13.1" height="11.6" fill="#fff" stroke="#0d2231" stroke-width="1.4"/><path d="M320.3,187.60000000000002 V186.0 L323.1,181.09 L326.40000000000003,185.38000000000002 L330.3,181.74 V187.60000000000002 Z" fill="#0d2231"/><circle cx="328.25" cy="180.05" r="1.2" fill="#0d2231"/>
<path d="M332.9,178.2 V190.1 H319.5" stroke="#7f8c95" stroke-width="0.7" fill="none"/>
<rect x="341.9" y="186" width="14.7" height="3.9" rx="0.5" fill="#0d2231"/><rect x="353.8" y="187.4" width="1.5" height="0.9" fill="#fff"/><path d="M345.8,180.4 L349.25,176.3 L352.7,180.4 Z" fill="#0d2231"/><rect x="347.9" y="180.2" width="2.7" height="4.6" fill="#0d2231"/>
<rect x="367.0" y="174" width="11.8" height="9" fill="#0d2231"/><rect x="368.0" y="174" width="0.7" height="8.6" fill="#9aa5ad"/><path d="M364.1,182.8 H382.0 L373.05,190.1 Z" fill="#0d2231"/><polyline points="364.20000000000005,185.2 373.05,191.6 381.90000000000003,185.2" stroke="#0d2231" stroke-width="1.0" fill="none"/>
<rect x="391.09999999999997" y="174" width="11.8" height="9" fill="#0d2231"/><rect x="392.09999999999997" y="174" width="0.7" height="8.6" fill="#9aa5ad"/><path d="M388.2,182.8 H406.09999999999997 L397.15,190.1 Z" fill="#0d2231"/><polyline points="388.3,185.2 397.15,191.6 406.0,185.2" stroke="#0d2231" stroke-width="1.0" fill="none"/>
<path d="M15.200000000000001,282.8 H34.8 L27.6,291.5 V296.5 Q27.6,297.8 26.3,297.8 H23.9 Q22.6,297.8 22.6,296.5 V291.5 Z" fill="#0d2231"/><ellipse cx="25.0" cy="282.4" rx="9.3" ry="3.5" fill="#fff" stroke="#0d2231" stroke-width="1.7"/><path d="M23.1,285.3 L27.1,289.3 M27.1,285.3 L23.1,289.3" stroke="#fff" stroke-width="1.25"/>
<rect x="53" y="284.7" width="13.9" height="3" rx="0.6" fill="#0d2231"/><rect x="47" y="289.5" width="14.4" height="2.9" rx="0.6" fill="#0d2231"/>
<path d="M82.1,281.8 V293.8 H96.8" stroke="#0d2231" stroke-width="1.7" fill="none"/><g fill="#0d2231"><rect x="84.6" y="288.8" width="1.7" height="3.4"/><rect x="88" y="285.1" width="1.7" height="7.1"/><rect x="91" y="287.8" width="1.7" height="4.4"/><rect x="94.2" y="282.1" width="1.7" height="10.1"/></g>
<rect x="117.2" y="279.3" width="8.8" height="2.3" rx="0.4" fill="#0d2231"/><rect x="111" y="283.0" width="20" height="9" rx="1.6" fill="#0d2231"/><circle cx="113.8" cy="285.7" r="1" fill="#fff"/><rect x="116.6" y="288.90000000000003" width="9.6" height="7.4" fill="#fff" stroke="#0d2231" stroke-width="1.5"/>
<path d="M146.52,289.08 A6.7,6.7 0 0 1 159.07,285.00" stroke="#0d2231" stroke-width="1.5" fill="none"/><path d="M159.78,287.22 A6.7,6.7 0 0 1 147.23,291.30" stroke="#0d2231" stroke-width="1.5" fill="none"/><path d="M160.95,280.85 V286.34 H155.46 Z" fill="#0d2231"/><path d="M145.35,295.45 V289.96 H150.84 Z" fill="#0d2231"/>
<rect x="181.65" y="281.95" width="14.7" height="12.2" fill="#fff" stroke="#10151a" stroke-width="1.3"/><path d="M183.2,292.6 V291.0 L186,285.755 L189.3,290.21000000000004 L194.7,286.43 V292.6 Z" fill="#10151a"/><circle cx="192.2" cy="284.675" r="1.2" fill="#10151a"/>
<rect x="1300.9" y="317.3" width="4.2" height="15.7" rx="0.7" fill="#0d2231"/><rect x="1295" y="323.05" width="16" height="4.2" rx="0.7" fill="#0d2231"/>
<rect x="1324.6" y="315.1" width="5.3" height="19.5" rx="0.7" fill="#0d2231"/><rect x="1317" y="323.1" width="19.9" height="4.7" rx="0.7" fill="#0d2231"/><path d="M1318.6,333.4 L1326.3,325.5" stroke="#0d2231" stroke-width="3.4"/><path d="M1321.9,324.2 H1327.6 V330 Z" fill="#0d2231"/><path d="M1319,333 L1325.7,326.1" stroke="#c3cbd0" stroke-width="1.1"/><path d="M1323.8,325 H1326.8 V328 Z" fill="#c3cbd0"/>
<g transform="translate(1341.2,315) scale(1.08)"><rect x="0" y="2.3" width="18" height="2.6" rx="1.1" fill="#0d2231"/><path d="M6.6,2.5 V0.7 H11.4 V2.5" stroke="#0d2231" stroke-width="1.4" fill="none"/><rect x="7.3" y="1.3" width="3.4" height="1.1" fill="#a9b2b8"/><path d="M1.4,6.1 H16.6 V16 Q16.6,17.9 14.7,17.9 H3.3 Q1.4,17.9 1.4,16 Z" fill="#0d2231"/><g fill="#b9c1c6"><rect x="4.2" y="8" width="1.4" height="7.4"/><rect x="7.0" y="8" width="1.4" height="7.4"/><rect x="9.8" y="8" width="1.4" height="7.4"/><rect x="12.6" y="8" width="1.4" height="7.4"/></g></g>
<rect x="1369" y="315" width="3.6" height="19.6" fill="#ababab"/>
<polyline points="1386.4,316.29999999999995 1377.4,324.9 1386.4,333.5" stroke="#ababab" stroke-width="3.8" fill="none" stroke-linejoin="miter"/>
<polyline points="1408,316.29999999999995 1399,324.9 1408,333.5" stroke="#ababab" stroke-width="3.8" fill="none" stroke-linejoin="miter"/>
<polyline points="1421,316.29999999999995 1430,324.9 1421,333.5" stroke="#ababab" stroke-width="3.8" fill="none" stroke-linejoin="miter"/>
<polyline points="1442.2,316.29999999999995 1451.2,324.9 1442.2,333.5" stroke="#ababab" stroke-width="3.8" fill="none" stroke-linejoin="miter"/>
<rect x="1456.2" y="315" width="3.6" height="19.6" fill="#ababab"/>
<path d="M1477.4,318.3 V332.8 M1471.4,324.2 L1477.4,318.2 L1483.4,324.2" stroke="#ababab" stroke-width="1.8" fill="none"/><path d="M1501.4,317.4 V331.9 M1495.4,326 L1501.4,332 L1507.4,326" stroke="#ababab" stroke-width="1.8" fill="none"/>
<path d="M1518.3,319.8 H1537.9 L1530.7,328.5 V333.5 Q1530.7,334.8 1529.4,334.8 H1527 Q1525.7,334.8 1525.7,333.5 V328.5 Z" fill="#0d2231"/><ellipse cx="1528.1" cy="319.4" rx="9.3" ry="3.5" fill="#fff" stroke="#0d2231" stroke-width="1.7"/><path d="M1526.2,322.3 L1530.2,326.3 M1530.2,322.3 L1526.2,326.3" stroke="#fff" stroke-width="1.25"/>
<rect x="1548" y="321.5" width="14" height="3" rx="0.6" fill="#0d2231"/><rect x="1542.2" y="326.2" width="14.7" height="3.1" rx="0.6" fill="#0d2231"/>
<path d="M1569,331.8 V317.2 H1577.5" stroke="#56656f" stroke-width="1.3" fill="none"/><path d="M1571.3,319 H1578.8 L1583.6,323.8 V333.6 H1571.3 Z" fill="#fff" stroke="#0d2231" stroke-width="1.4" stroke-linejoin="round"/><path d="M1578.6,319.2 V324 H1583.4" stroke="#0d2231" stroke-width="1.2" fill="none"/>
<rect x="1596.2" y="316.2" width="8.8" height="2.3" rx="0.4" fill="#0d2231"/><rect x="1590" y="319.9" width="20" height="9" rx="1.6" fill="#0d2231"/><circle cx="1592.8" cy="322.59999999999997" r="1" fill="#fff"/><rect x="1595.6" y="325.8" width="9.6" height="7.4" fill="#fff" stroke="#0d2231" stroke-width="1.5"/>
<path d="M1617.57,326.13 A6.7,6.7 0 0 1 1630.12,322.05" stroke="#0d2231" stroke-width="1.5" fill="none"/><path d="M1630.83,324.27 A6.7,6.7 0 0 1 1618.28,328.35" stroke="#0d2231" stroke-width="1.5" fill="none"/><path d="M1632.00,317.90 V323.39 H1626.51 Z" fill="#0d2231"/><path d="M1616.40,332.50 V327.01 H1621.89 Z" fill="#0d2231"/>
<rect x="1639.7" y="323" width="3.6" height="3.9" fill="#fff" stroke="#0d2231" stroke-width="1.4"/><path d="M1643.8,325 H1647 M1647.7,317.6 H1653 M1647.7,325.1 H1653 M1647.7,332.6 H1653" stroke="#0d2231" stroke-width="2.4" fill="none"/><rect x="1645.9" y="316.4" width="3.4" height="17.4" fill="#0d2231"/><g fill="#fff" stroke="#0d2231" stroke-width="1.4"><rect x="1653.7" y="315.7" width="3.7" height="3.8"/><rect x="1653.7" y="323.2" width="3.7" height="3.8"/><rect x="1653.7" y="330.7" width="3.7" height="3.8"/></g>
<defs><linearGradient id="xg" x1="0" y1="0" x2="1" y2="1"><stop offset="0" stop-color="#ffffff"/><stop offset="0.5" stop-color="#f3f7fe"/><stop offset="1" stop-color="#b4caf0"/></linearGradient><linearGradient id="xb" x1="0" y1="0" x2="1" y2="1"><stop offset="0" stop-color="#7db562"/><stop offset="1" stop-color="#2a6410"/></linearGradient></defs><path d="M1779.6,346.4 H1806.9 L1815.8,355.3 V390.4 H1779.6 Z" fill="url(#xg)" stroke="#92acd8" stroke-width="1"/><path d="M1815.9,355.6 V390.6 H1780.2" stroke="#4f74b8" stroke-width="1.3" fill="none"/><path d="M1806.9,346.4 V355.3 H1815.8 Z" fill="#dbe6f8" stroke="#7b97c8" stroke-width="0.9"/><g stroke="#9db6de" stroke-width="0.8" fill="none"><path d="M1784.4,358.3 H1809 M1784.4,362.4 H1809 M1784.4,366.4 H1809 M1784.4,370.5 H1809 M1784.4,374.5 H1803 M1784.4,378.6 H1797 M1784.4,382.6 H1797"/><path d="M1784.4,358.3 V382.6 M1790.5,358.3 V382.6 M1796.6,358.3 V382.6 M1802.8,358.3 V374.5 M1809,358.3 V374"/></g><g fill="#c9d8f2" stroke="#7f9dd0" stroke-width="0.8"><rect x="1795.8" y="377" width="3.4" height="6"/><rect x="1801" y="374.6" width="3.6" height="8.4"/></g><path d="M1794,383.3 H1808" stroke="#7f9dd0" stroke-width="1"/><rect x="1772.8" y="352.1" width="17.2" height="18.7" fill="#eef4e8" stroke="url(#xb)" stroke-width="1.8"/><path d="M1774.6,356.6 L1785.6,365.6 M1786.6,356.6 L1775.2,365.6" stroke="#3d9a2b" stroke-width="3.1"/><path d="M1774.2,356.9 L1784.6,365.6" stroke="#8fd07a" stroke-width="0.9"/><path d="M1780.5,366.3 H1788.3" stroke="#1f4f12" stroke-width="1.1"/>
<path d="M496.5,316.3 V332.6 L500.2,329 L502.9,335 L505.2,334 L502.5,328.2 H507.7 Z" fill="#fff" stroke="#000" stroke-width="1" stroke-linejoin="round"/></svg>
</body></html>
